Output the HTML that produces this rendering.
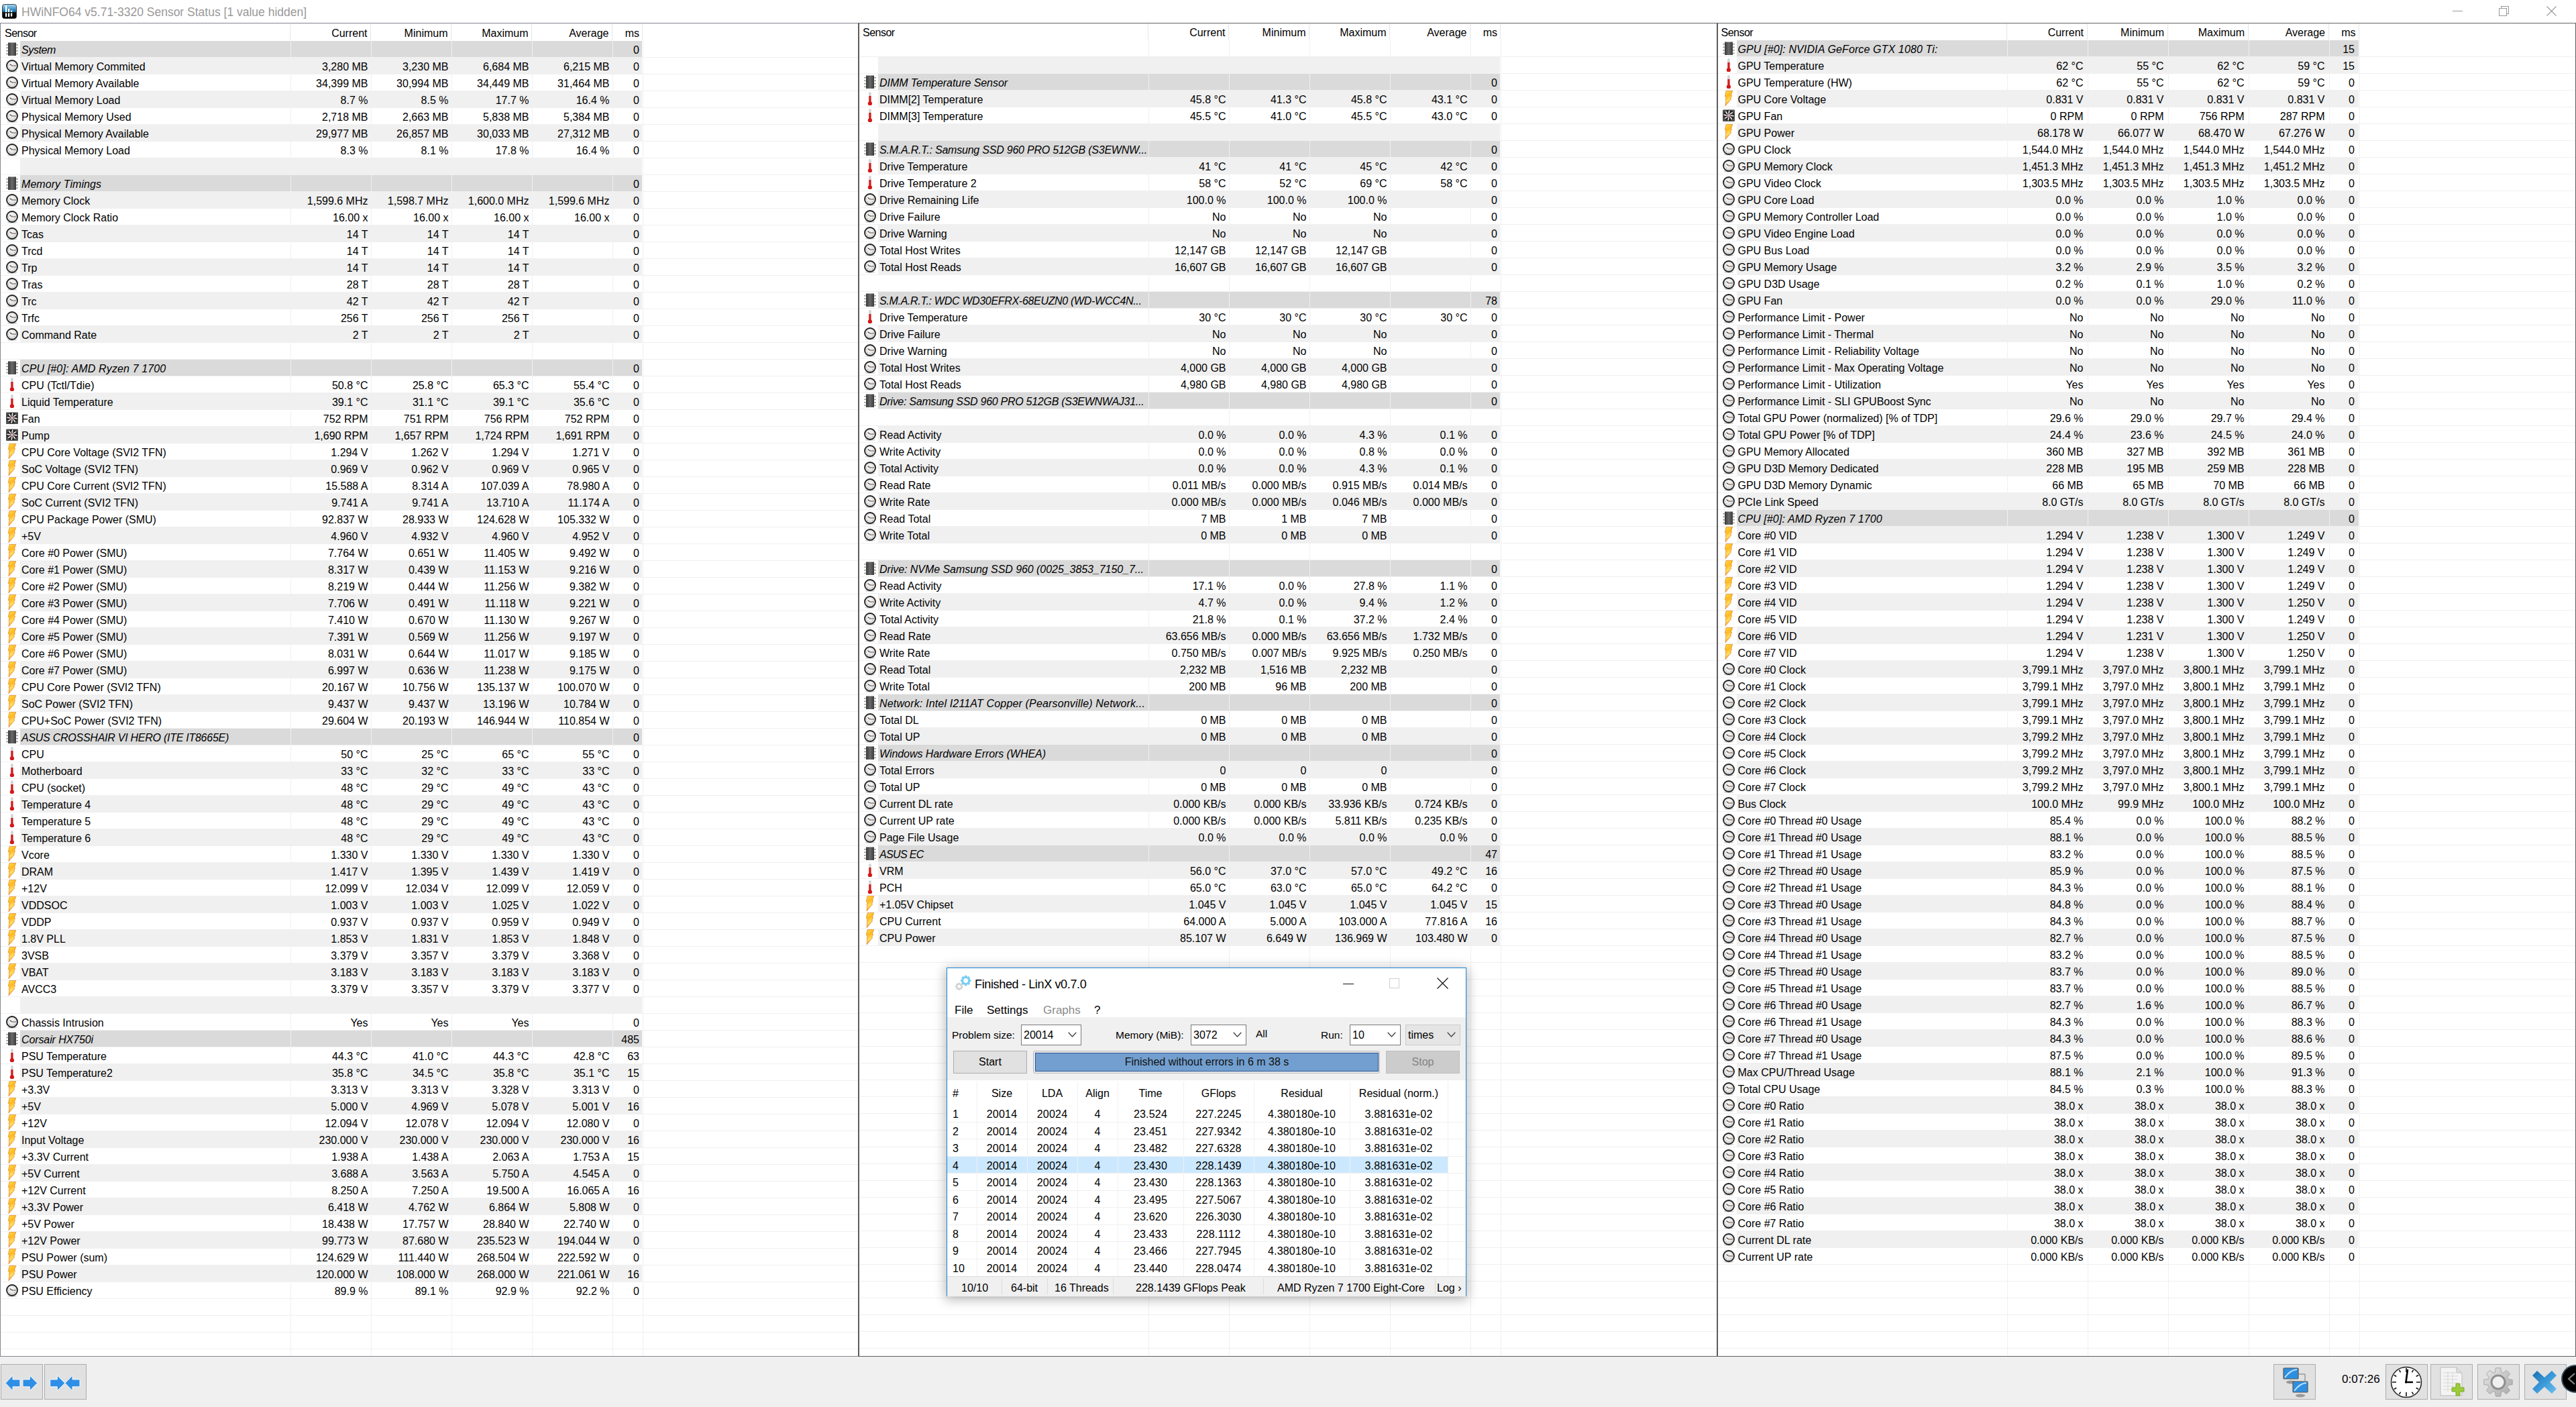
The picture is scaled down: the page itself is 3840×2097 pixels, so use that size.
<!DOCTYPE html><html><head><meta charset="utf-8"><title>HWiNFO64 Sensor Status</title><style>
*{box-sizing:border-box}
body{margin:0;width:3840px;height:2097px;overflow:hidden;position:relative;background:#fff;font-family:"Liberation Sans",sans-serif;font-size:16px;color:#000}
.a{position:absolute}
.p{position:absolute;top:35px;width:1280px;height:1986px;overflow:hidden}
.bg{position:absolute;left:30px;width:927px;height:24px}
.g1{background:#f0f0f0}.g2{background:#dadada}
.hl{position:absolute;left:1px;height:1px;background:#f0f0f0}
.vl{position:absolute;width:1px;background:#f0f0f0}
.hv{position:absolute;top:1px;width:1px;height:24px;background:#e5e5e5}
.w{position:absolute;left:0;width:1000px;height:25px}
.w b{position:absolute;top:2px;font-weight:normal;white-space:pre;line-height:25px;height:25px;text-align:right;width:115px}
.w b.n{left:32px;text-align:left;width:auto}
.w b.i{font-style:italic}
.w b.c1{left:432px;width:116.5px}.w b.c2{left:552px;width:116.5px}.w b.c3{left:672px;width:116.5px}.w b.c4{left:792px;width:116.5px}.w b.c5{left:912px;width:41px}
.w svg{position:absolute;left:8px;top:3px;width:20px;height:20px}.w svg.v{top:1px;height:24px}
.p3 .w b.c1,.p3 .w b.c2,.p3 .w b.c3,.p3 .w b.c4,.p3 .w b.c5{margin-left:-1.5px}
.hd b{position:absolute;top:2px;font-weight:normal;white-space:pre;line-height:25px}
</style></head><body>

<svg width="0" height="0" style="position:absolute">
<defs>
<linearGradient id="chipg" x1="0" y1="0" x2="1" y2="0"><stop offset="0" stop-color="#3a3a3a"/><stop offset="0.5" stop-color="#6a6a6a"/><stop offset="1" stop-color="#3a3a3a"/></linearGradient>
<radialGradient id="clkg" cx="0.45" cy="0.4" r="0.6"><stop offset="0" stop-color="#fafafa"/><stop offset="1" stop-color="#d8d8d8"/></radialGradient>
<linearGradient id="boltg" x1="0" y1="0" x2="0.3" y2="1"><stop offset="0" stop-color="#ffe24a"/><stop offset="0.4" stop-color="#ffb820"/><stop offset="0.7" stop-color="#ffe060"/><stop offset="1" stop-color="#f09020"/></linearGradient>
<symbol id="iG" viewBox="0 0 20 20">
<rect x="4" y="0.5" width="12" height="20" fill="url(#chipg)"/>
<g fill="#777"><rect x="1.5" y="3" width="2" height="1.6"/><rect x="1.5" y="7.5" width="2" height="1.6"/><rect x="1.5" y="12" width="2" height="1.6"/><rect x="1.5" y="16.5" width="2" height="1.6"/>
<rect x="16.5" y="3" width="2" height="1.6"/><rect x="16.5" y="7.5" width="2" height="1.6"/><rect x="16.5" y="12" width="2" height="1.6"/><rect x="16.5" y="16.5" width="2" height="1.6"/></g>
</symbol>
<symbol id="iC" viewBox="0 0 20 20">
<ellipse cx="10" cy="18.6" rx="7.5" ry="1.4" fill="#d0d0d0"/>
<circle cx="10" cy="9.6" r="8.9" fill="#e8e8e8"/>
<circle cx="10" cy="10" r="8" fill="url(#clkg)" stroke="#222" stroke-width="1.8"/>
<g fill="#555"><circle cx="4.6" cy="10" r="0.45"/><circle cx="15.4" cy="10" r="0.45"/><circle cx="6.2" cy="13.8" r="0.45"/><circle cx="13.8" cy="13.8" r="0.45"/><circle cx="10" cy="15.4" r="0.45"/></g>
<path d="M6.6 7.6L10 10" stroke="#1a2a40" stroke-width="1.1" fill="none"/>
<path d="M10 10H15.6" stroke="#444" stroke-width="0.9" fill="none"/>
<circle cx="10" cy="9.6" r="1" fill="#d08050"/>
</symbol>
<symbol id="iT" viewBox="0 0 20 20">
<ellipse cx="9.9" cy="21" rx="2.6" ry="0.7" fill="#c8c8c8"/>
<rect x="8.1" y="0" width="3.6" height="15" rx="1.6" fill="#d4d4d4"/>
<rect x="8.3" y="6" width="3.2" height="10" fill="#d81c1c"/>
<circle cx="9.9" cy="17.3" r="3.1" fill="#d41818"/>
</symbol>
<symbol id="iV" viewBox="0 -3 20 24">
<path d="M6.1 -2.6L15.7 -2.6L13.2 4.2L14.6 4.5L12.5 9L13.7 9.5L5 19.8L5.8 11.5L5.2 10.8L6 7.5L4.4 5.5Z" fill="url(#boltg)" stroke="#e07a20" stroke-width="0.7" stroke-linejoin="round"/>
</symbol>
<symbol id="iF" viewBox="0 0 20 20">
<rect x="1" y="1.5" width="18" height="17.5" rx="1" fill="#505050"/>
<circle cx="10" cy="10" r="8.2" fill="#262626"/>
<path d="M10.0 7.0L10.9 2.5M12.1 7.9L16.0 5.3M13.0 10.0L17.5 10.9M12.1 12.1L14.7 16.0M10.0 13.0L9.1 17.5M7.9 12.1L4.0 14.7M7.0 10.0L2.5 9.1M7.9 7.9L5.3 4.0" stroke="#f4f4f4" stroke-width="1.6" fill="none"/>
<circle cx="10" cy="10" r="2.5" fill="#b8b8b8" stroke="#c05060" stroke-width="0.6"/>
</symbol>
</defs></svg>

<svg class="a" style="left:3px;top:6px" width="22" height="22" viewBox="0 0 22 22">
<defs><linearGradient id="hwg" x1="0" y1="0" x2="0" y2="1"><stop offset="0" stop-color="#a8d8f4"/><stop offset="0.55" stop-color="#0a6aa8"/><stop offset="0.56" stop-color="#111"/><stop offset="1" stop-color="#000"/></linearGradient></defs>
<rect x="0.5" y="0.5" width="21" height="21" rx="3" fill="url(#hwg)" stroke="#222" stroke-width="0.8"/>
<rect x="5" y="2.5" width="2.2" height="9.5" fill="#fff"/><rect x="9" y="7" width="2.2" height="5" fill="#fff"/><rect x="13" y="9.5" width="2.4" height="2.5" rx="1" fill="#fff"/>
<path d="M5 13.5h2.2v5.5h-2.2zM9 13.5h2.2v5.5h-2.2zM13 13.5h2.2v5h-2.2z" fill="#fff"/>
</svg>
<div class="a" style="left:32px;top:5.5px;line-height:25px;font-size:17.5px;color:#999;white-space:pre">HWiNFO64 v5.71-3320 Sensor Status [1 value hidden]</div>
<div class="a" style="left:3656px;top:16px;width:15px;height:1px;background:#999"></div>
<div class="a" style="left:3728px;top:9px;width:12px;height:12px;border:1px solid #999"></div>
<div class="a" style="left:3725px;top:12px;width:12px;height:12px;border:1px solid #999;background:#fff"></div>
<svg class="a" style="left:3796px;top:9px" width="15" height="15"><path d="M0.5 0.5L14.5 14.5M14.5 0.5L0.5 14.5" stroke="#999" stroke-width="1.1"/></svg>
<div class="a" style="left:0;top:34px;width:1279px;height:1px;background:#85878f"></div><div class="a" style="left:1279px;top:34px;width:2561px;height:1px;background:#646464"></div>
<div class="p" style="left:0px;top:35px;">
<div class="bg g2" style="top:26px"></div>
<div class="bg g1" style="top:51px"></div>
<div class="bg g1" style="top:101px"></div>
<div class="bg g1" style="top:151px"></div>
<div class="bg g1" style="top:201px"></div>
<div class="bg g2" style="top:226px"></div>
<div class="bg g1" style="top:251px"></div>
<div class="bg g1" style="top:301px"></div>
<div class="bg g1" style="top:351px"></div>
<div class="bg g1" style="top:401px"></div>
<div class="bg g1" style="top:451px"></div>
<div class="bg g2" style="top:501px"></div>
<div class="bg g1" style="top:551px"></div>
<div class="bg g1" style="top:601px"></div>
<div class="bg g1" style="top:651px"></div>
<div class="bg g1" style="top:701px"></div>
<div class="bg g1" style="top:751px"></div>
<div class="bg g1" style="top:801px"></div>
<div class="bg g1" style="top:851px"></div>
<div class="bg g1" style="top:901px"></div>
<div class="bg g1" style="top:951px"></div>
<div class="bg g1" style="top:1001px"></div>
<div class="bg g2" style="top:1051px"></div>
<div class="bg g1" style="top:1101px"></div>
<div class="bg g1" style="top:1151px"></div>
<div class="bg g1" style="top:1201px"></div>
<div class="bg g1" style="top:1251px"></div>
<div class="bg g1" style="top:1301px"></div>
<div class="bg g1" style="top:1351px"></div>
<div class="bg g1" style="top:1401px"></div>
<div class="bg g1" style="top:1451px"></div>
<div class="bg g2" style="top:1501px"></div>
<div class="bg g1" style="top:1551px"></div>
<div class="bg g1" style="top:1601px"></div>
<div class="bg g1" style="top:1651px"></div>
<div class="bg g1" style="top:1701px"></div>
<div class="bg g1" style="top:1751px"></div>
<div class="bg g1" style="top:1801px"></div>
<div class="bg g1" style="top:1851px"></div>
<div class="hl" style="top:50px;width:1279px"></div>
<div class="hl" style="top:75px;width:1279px"></div>
<div class="hl" style="top:100px;width:1279px"></div>
<div class="hl" style="top:125px;width:1279px"></div>
<div class="hl" style="top:150px;width:1279px"></div>
<div class="hl" style="top:175px;width:1279px"></div>
<div class="hl" style="top:200px;width:1279px"></div>
<div class="hl" style="top:225px;width:1279px"></div>
<div class="hl" style="top:250px;width:1279px"></div>
<div class="hl" style="top:275px;width:1279px"></div>
<div class="hl" style="top:300px;width:1279px"></div>
<div class="hl" style="top:325px;width:1279px"></div>
<div class="hl" style="top:350px;width:1279px"></div>
<div class="hl" style="top:375px;width:1279px"></div>
<div class="hl" style="top:400px;width:1279px"></div>
<div class="hl" style="top:425px;width:1279px"></div>
<div class="hl" style="top:450px;width:1279px"></div>
<div class="hl" style="top:475px;width:1279px"></div>
<div class="hl" style="top:500px;width:1279px"></div>
<div class="hl" style="top:525px;width:1279px"></div>
<div class="hl" style="top:550px;width:1279px"></div>
<div class="hl" style="top:575px;width:1279px"></div>
<div class="hl" style="top:600px;width:1279px"></div>
<div class="hl" style="top:625px;width:1279px"></div>
<div class="hl" style="top:650px;width:1279px"></div>
<div class="hl" style="top:675px;width:1279px"></div>
<div class="hl" style="top:700px;width:1279px"></div>
<div class="hl" style="top:725px;width:1279px"></div>
<div class="hl" style="top:750px;width:1279px"></div>
<div class="hl" style="top:775px;width:1279px"></div>
<div class="hl" style="top:800px;width:1279px"></div>
<div class="hl" style="top:825px;width:1279px"></div>
<div class="hl" style="top:850px;width:1279px"></div>
<div class="hl" style="top:875px;width:1279px"></div>
<div class="hl" style="top:900px;width:1279px"></div>
<div class="hl" style="top:925px;width:1279px"></div>
<div class="hl" style="top:950px;width:1279px"></div>
<div class="hl" style="top:975px;width:1279px"></div>
<div class="hl" style="top:1000px;width:1279px"></div>
<div class="hl" style="top:1025px;width:1279px"></div>
<div class="hl" style="top:1050px;width:1279px"></div>
<div class="hl" style="top:1075px;width:1279px"></div>
<div class="hl" style="top:1100px;width:1279px"></div>
<div class="hl" style="top:1125px;width:1279px"></div>
<div class="hl" style="top:1150px;width:1279px"></div>
<div class="hl" style="top:1175px;width:1279px"></div>
<div class="hl" style="top:1200px;width:1279px"></div>
<div class="hl" style="top:1225px;width:1279px"></div>
<div class="hl" style="top:1250px;width:1279px"></div>
<div class="hl" style="top:1275px;width:1279px"></div>
<div class="hl" style="top:1300px;width:1279px"></div>
<div class="hl" style="top:1325px;width:1279px"></div>
<div class="hl" style="top:1350px;width:1279px"></div>
<div class="hl" style="top:1375px;width:1279px"></div>
<div class="hl" style="top:1400px;width:1279px"></div>
<div class="hl" style="top:1425px;width:1279px"></div>
<div class="hl" style="top:1450px;width:1279px"></div>
<div class="hl" style="top:1475px;width:1279px"></div>
<div class="hl" style="top:1500px;width:1279px"></div>
<div class="hl" style="top:1525px;width:1279px"></div>
<div class="hl" style="top:1550px;width:1279px"></div>
<div class="hl" style="top:1575px;width:1279px"></div>
<div class="hl" style="top:1600px;width:1279px"></div>
<div class="hl" style="top:1625px;width:1279px"></div>
<div class="hl" style="top:1650px;width:1279px"></div>
<div class="hl" style="top:1675px;width:1279px"></div>
<div class="hl" style="top:1700px;width:1279px"></div>
<div class="hl" style="top:1725px;width:1279px"></div>
<div class="hl" style="top:1750px;width:1279px"></div>
<div class="hl" style="top:1775px;width:1279px"></div>
<div class="hl" style="top:1800px;width:1279px"></div>
<div class="hl" style="top:1825px;width:1279px"></div>
<div class="hl" style="top:1850px;width:1279px"></div>
<div class="hl" style="top:1875px;width:1279px"></div>
<div class="hl" style="top:1900px;width:1279px"></div>
<div class="hl" style="top:1925px;width:1279px"></div>
<div class="hl" style="top:1950px;width:1279px"></div>
<div class="hl" style="top:1975px;width:1279px"></div>
<div class="vl" style="left:433px;top:25px;height:1961px"></div>
<div class="vl" style="left:553px;top:25px;height:1961px"></div>
<div class="vl" style="left:673px;top:25px;height:1961px"></div>
<div class="vl" style="left:793px;top:25px;height:1961px"></div>
<div class="vl" style="left:913px;top:25px;height:1961px"></div>
<div class="vl" style="left:958px;top:25px;height:1961px"></div>
<div class="hd">
<div class="hv" style="left:432px"></div>
<div class="hv" style="left:552px"></div>
<div class="hv" style="left:672px"></div>
<div class="hv" style="left:792px"></div>
<div class="hv" style="left:912px"></div>
<div class="hv" style="left:957px"></div>
<b style="left:7px;letter-spacing:-0.5px">Sensor</b>
<b style="right:732.5px">Current</b>
<b style="right:612.5px">Minimum</b>
<b style="right:492.5px">Maximum</b>
<b style="right:372.5px">Average</b>
<b style="right:327px">ms</b>
</div>
<div class="w" style="top:25px"><svg><use href="#iG"/></svg><b class="n i" style="letter-spacing:-0.391px">System</b><b class="c5">0</b></div>
<div class="w" style="top:50px"><svg><use href="#iC"/></svg><b class="n">Virtual Memory Commited</b><b class="c1">3,280 MB</b><b class="c2">3,230 MB</b><b class="c3">6,684 MB</b><b class="c4">6,215 MB</b><b class="c5">0</b></div>
<div class="w" style="top:75px"><svg><use href="#iC"/></svg><b class="n">Virtual Memory Available</b><b class="c1">34,399 MB</b><b class="c2">30,994 MB</b><b class="c3">34,449 MB</b><b class="c4">31,464 MB</b><b class="c5">0</b></div>
<div class="w" style="top:100px"><svg><use href="#iC"/></svg><b class="n">Virtual Memory Load</b><b class="c1">8.7 %</b><b class="c2">8.5 %</b><b class="c3">17.7 %</b><b class="c4">16.4 %</b><b class="c5">0</b></div>
<div class="w" style="top:125px"><svg><use href="#iC"/></svg><b class="n">Physical Memory Used</b><b class="c1">2,718 MB</b><b class="c2">2,663 MB</b><b class="c3">5,838 MB</b><b class="c4">5,384 MB</b><b class="c5">0</b></div>
<div class="w" style="top:150px"><svg><use href="#iC"/></svg><b class="n">Physical Memory Available</b><b class="c1">29,977 MB</b><b class="c2">26,857 MB</b><b class="c3">30,033 MB</b><b class="c4">27,312 MB</b><b class="c5">0</b></div>
<div class="w" style="top:175px"><svg><use href="#iC"/></svg><b class="n">Physical Memory Load</b><b class="c1">8.3 %</b><b class="c2">8.1 %</b><b class="c3">17.8 %</b><b class="c4">16.4 %</b><b class="c5">0</b></div>
<div class="w" style="top:225px"><svg><use href="#iG"/></svg><b class="n i" style="letter-spacing:0.065px">Memory Timings</b><b class="c5">0</b></div>
<div class="w" style="top:250px"><svg><use href="#iC"/></svg><b class="n">Memory Clock</b><b class="c1">1,599.6 MHz</b><b class="c2">1,598.7 MHz</b><b class="c3">1,600.0 MHz</b><b class="c4">1,599.6 MHz</b><b class="c5">0</b></div>
<div class="w" style="top:275px"><svg><use href="#iC"/></svg><b class="n">Memory Clock Ratio</b><b class="c1">16.00 x</b><b class="c2">16.00 x</b><b class="c3">16.00 x</b><b class="c4">16.00 x</b><b class="c5">0</b></div>
<div class="w" style="top:300px"><svg><use href="#iC"/></svg><b class="n">Tcas</b><b class="c1">14 T</b><b class="c2">14 T</b><b class="c3">14 T</b><b class="c5">0</b></div>
<div class="w" style="top:325px"><svg><use href="#iC"/></svg><b class="n">Trcd</b><b class="c1">14 T</b><b class="c2">14 T</b><b class="c3">14 T</b><b class="c5">0</b></div>
<div class="w" style="top:350px"><svg><use href="#iC"/></svg><b class="n">Trp</b><b class="c1">14 T</b><b class="c2">14 T</b><b class="c3">14 T</b><b class="c5">0</b></div>
<div class="w" style="top:375px"><svg><use href="#iC"/></svg><b class="n">Tras</b><b class="c1">28 T</b><b class="c2">28 T</b><b class="c3">28 T</b><b class="c5">0</b></div>
<div class="w" style="top:400px"><svg><use href="#iC"/></svg><b class="n">Trc</b><b class="c1">42 T</b><b class="c2">42 T</b><b class="c3">42 T</b><b class="c5">0</b></div>
<div class="w" style="top:425px"><svg><use href="#iC"/></svg><b class="n">Trfc</b><b class="c1">256 T</b><b class="c2">256 T</b><b class="c3">256 T</b><b class="c5">0</b></div>
<div class="w" style="top:450px"><svg><use href="#iC"/></svg><b class="n">Command Rate</b><b class="c1">2 T</b><b class="c2">2 T</b><b class="c3">2 T</b><b class="c5">0</b></div>
<div class="w" style="top:500px"><svg><use href="#iG"/></svg><b class="n i" style="letter-spacing:0.133px">CPU [#0]: AMD Ryzen 7 1700</b><b class="c5">0</b></div>
<div class="w" style="top:525px"><svg><use href="#iT"/></svg><b class="n">CPU (Tctl/Tdie)</b><b class="c1">50.8 °C</b><b class="c2">25.8 °C</b><b class="c3">65.3 °C</b><b class="c4">55.4 °C</b><b class="c5">0</b></div>
<div class="w" style="top:550px"><svg><use href="#iT"/></svg><b class="n">Liquid Temperature</b><b class="c1">39.1 °C</b><b class="c2">31.1 °C</b><b class="c3">39.1 °C</b><b class="c4">35.6 °C</b><b class="c5">0</b></div>
<div class="w" style="top:575px"><svg><use href="#iF"/></svg><b class="n">Fan</b><b class="c1">752 RPM</b><b class="c2">751 RPM</b><b class="c3">756 RPM</b><b class="c4">752 RPM</b><b class="c5">0</b></div>
<div class="w" style="top:600px"><svg><use href="#iF"/></svg><b class="n">Pump</b><b class="c1">1,690 RPM</b><b class="c2">1,657 RPM</b><b class="c3">1,724 RPM</b><b class="c4">1,691 RPM</b><b class="c5">0</b></div>
<div class="w" style="top:625px"><svg class=v><use href="#iV"/></svg><b class="n">CPU Core Voltage (SVI2 TFN)</b><b class="c1">1.294 V</b><b class="c2">1.262 V</b><b class="c3">1.294 V</b><b class="c4">1.271 V</b><b class="c5">0</b></div>
<div class="w" style="top:650px"><svg class=v><use href="#iV"/></svg><b class="n">SoC Voltage (SVI2 TFN)</b><b class="c1">0.969 V</b><b class="c2">0.962 V</b><b class="c3">0.969 V</b><b class="c4">0.965 V</b><b class="c5">0</b></div>
<div class="w" style="top:675px"><svg class=v><use href="#iV"/></svg><b class="n">CPU Core Current (SVI2 TFN)</b><b class="c1">15.588 A</b><b class="c2">8.314 A</b><b class="c3">107.039 A</b><b class="c4">78.980 A</b><b class="c5">0</b></div>
<div class="w" style="top:700px"><svg class=v><use href="#iV"/></svg><b class="n">SoC Current (SVI2 TFN)</b><b class="c1">9.741 A</b><b class="c2">9.741 A</b><b class="c3">13.710 A</b><b class="c4">11.174 A</b><b class="c5">0</b></div>
<div class="w" style="top:725px"><svg class=v><use href="#iV"/></svg><b class="n">CPU Package Power (SMU)</b><b class="c1">92.837 W</b><b class="c2">28.933 W</b><b class="c3">124.628 W</b><b class="c4">105.332 W</b><b class="c5">0</b></div>
<div class="w" style="top:750px"><svg class=v><use href="#iV"/></svg><b class="n">+5V</b><b class="c1">4.960 V</b><b class="c2">4.932 V</b><b class="c3">4.960 V</b><b class="c4">4.952 V</b><b class="c5">0</b></div>
<div class="w" style="top:775px"><svg class=v><use href="#iV"/></svg><b class="n">Core #0 Power (SMU)</b><b class="c1">7.764 W</b><b class="c2">0.651 W</b><b class="c3">11.405 W</b><b class="c4">9.492 W</b><b class="c5">0</b></div>
<div class="w" style="top:800px"><svg class=v><use href="#iV"/></svg><b class="n">Core #1 Power (SMU)</b><b class="c1">8.317 W</b><b class="c2">0.439 W</b><b class="c3">11.153 W</b><b class="c4">9.216 W</b><b class="c5">0</b></div>
<div class="w" style="top:825px"><svg class=v><use href="#iV"/></svg><b class="n">Core #2 Power (SMU)</b><b class="c1">8.219 W</b><b class="c2">0.444 W</b><b class="c3">11.256 W</b><b class="c4">9.382 W</b><b class="c5">0</b></div>
<div class="w" style="top:850px"><svg class=v><use href="#iV"/></svg><b class="n">Core #3 Power (SMU)</b><b class="c1">7.706 W</b><b class="c2">0.491 W</b><b class="c3">11.118 W</b><b class="c4">9.221 W</b><b class="c5">0</b></div>
<div class="w" style="top:875px"><svg class=v><use href="#iV"/></svg><b class="n">Core #4 Power (SMU)</b><b class="c1">7.410 W</b><b class="c2">0.670 W</b><b class="c3">11.130 W</b><b class="c4">9.267 W</b><b class="c5">0</b></div>
<div class="w" style="top:900px"><svg class=v><use href="#iV"/></svg><b class="n">Core #5 Power (SMU)</b><b class="c1">7.391 W</b><b class="c2">0.569 W</b><b class="c3">11.256 W</b><b class="c4">9.197 W</b><b class="c5">0</b></div>
<div class="w" style="top:925px"><svg class=v><use href="#iV"/></svg><b class="n">Core #6 Power (SMU)</b><b class="c1">8.031 W</b><b class="c2">0.644 W</b><b class="c3">11.017 W</b><b class="c4">9.185 W</b><b class="c5">0</b></div>
<div class="w" style="top:950px"><svg class=v><use href="#iV"/></svg><b class="n">Core #7 Power (SMU)</b><b class="c1">6.997 W</b><b class="c2">0.636 W</b><b class="c3">11.238 W</b><b class="c4">9.175 W</b><b class="c5">0</b></div>
<div class="w" style="top:975px"><svg class=v><use href="#iV"/></svg><b class="n">CPU Core Power (SVI2 TFN)</b><b class="c1">20.167 W</b><b class="c2">10.756 W</b><b class="c3">135.137 W</b><b class="c4">100.070 W</b><b class="c5">0</b></div>
<div class="w" style="top:1000px"><svg class=v><use href="#iV"/></svg><b class="n">SoC Power (SVI2 TFN)</b><b class="c1">9.437 W</b><b class="c2">9.437 W</b><b class="c3">13.196 W</b><b class="c4">10.784 W</b><b class="c5">0</b></div>
<div class="w" style="top:1025px"><svg class=v><use href="#iV"/></svg><b class="n">CPU+SoC Power (SVI2 TFN)</b><b class="c1">29.604 W</b><b class="c2">20.193 W</b><b class="c3">146.944 W</b><b class="c4">110.854 W</b><b class="c5">0</b></div>
<div class="w" style="top:1050px"><svg><use href="#iG"/></svg><b class="n i" style="letter-spacing:-0.258px">ASUS CROSSHAIR VI HERO (ITE IT8665E)</b><b class="c5">0</b></div>
<div class="w" style="top:1075px"><svg><use href="#iT"/></svg><b class="n">CPU</b><b class="c1">50 °C</b><b class="c2">25 °C</b><b class="c3">65 °C</b><b class="c4">55 °C</b><b class="c5">0</b></div>
<div class="w" style="top:1100px"><svg><use href="#iT"/></svg><b class="n">Motherboard</b><b class="c1">33 °C</b><b class="c2">32 °C</b><b class="c3">33 °C</b><b class="c4">33 °C</b><b class="c5">0</b></div>
<div class="w" style="top:1125px"><svg><use href="#iT"/></svg><b class="n">CPU (socket)</b><b class="c1">48 °C</b><b class="c2">29 °C</b><b class="c3">49 °C</b><b class="c4">43 °C</b><b class="c5">0</b></div>
<div class="w" style="top:1150px"><svg><use href="#iT"/></svg><b class="n">Temperature 4</b><b class="c1">48 °C</b><b class="c2">29 °C</b><b class="c3">49 °C</b><b class="c4">43 °C</b><b class="c5">0</b></div>
<div class="w" style="top:1175px"><svg><use href="#iT"/></svg><b class="n">Temperature 5</b><b class="c1">48 °C</b><b class="c2">29 °C</b><b class="c3">49 °C</b><b class="c4">43 °C</b><b class="c5">0</b></div>
<div class="w" style="top:1200px"><svg><use href="#iT"/></svg><b class="n">Temperature 6</b><b class="c1">48 °C</b><b class="c2">29 °C</b><b class="c3">49 °C</b><b class="c4">43 °C</b><b class="c5">0</b></div>
<div class="w" style="top:1225px"><svg class=v><use href="#iV"/></svg><b class="n">Vcore</b><b class="c1">1.330 V</b><b class="c2">1.330 V</b><b class="c3">1.330 V</b><b class="c4">1.330 V</b><b class="c5">0</b></div>
<div class="w" style="top:1250px"><svg class=v><use href="#iV"/></svg><b class="n">DRAM</b><b class="c1">1.417 V</b><b class="c2">1.395 V</b><b class="c3">1.439 V</b><b class="c4">1.419 V</b><b class="c5">0</b></div>
<div class="w" style="top:1275px"><svg class=v><use href="#iV"/></svg><b class="n">+12V</b><b class="c1">12.099 V</b><b class="c2">12.034 V</b><b class="c3">12.099 V</b><b class="c4">12.059 V</b><b class="c5">0</b></div>
<div class="w" style="top:1300px"><svg class=v><use href="#iV"/></svg><b class="n">VDDSOC</b><b class="c1">1.003 V</b><b class="c2">1.003 V</b><b class="c3">1.025 V</b><b class="c4">1.022 V</b><b class="c5">0</b></div>
<div class="w" style="top:1325px"><svg class=v><use href="#iV"/></svg><b class="n">VDDP</b><b class="c1">0.937 V</b><b class="c2">0.937 V</b><b class="c3">0.959 V</b><b class="c4">0.949 V</b><b class="c5">0</b></div>
<div class="w" style="top:1350px"><svg class=v><use href="#iV"/></svg><b class="n">1.8V PLL</b><b class="c1">1.853 V</b><b class="c2">1.831 V</b><b class="c3">1.853 V</b><b class="c4">1.848 V</b><b class="c5">0</b></div>
<div class="w" style="top:1375px"><svg class=v><use href="#iV"/></svg><b class="n">3VSB</b><b class="c1">3.379 V</b><b class="c2">3.357 V</b><b class="c3">3.379 V</b><b class="c4">3.368 V</b><b class="c5">0</b></div>
<div class="w" style="top:1400px"><svg class=v><use href="#iV"/></svg><b class="n">VBAT</b><b class="c1">3.183 V</b><b class="c2">3.183 V</b><b class="c3">3.183 V</b><b class="c4">3.183 V</b><b class="c5">0</b></div>
<div class="w" style="top:1425px"><svg class=v><use href="#iV"/></svg><b class="n">AVCC3</b><b class="c1">3.379 V</b><b class="c2">3.357 V</b><b class="c3">3.379 V</b><b class="c4">3.377 V</b><b class="c5">0</b></div>
<div class="w" style="top:1475px"><svg><use href="#iC"/></svg><b class="n">Chassis Intrusion</b><b class="c1">Yes</b><b class="c2">Yes</b><b class="c3">Yes</b><b class="c5">0</b></div>
<div class="w" style="top:1500px"><svg><use href="#iG"/></svg><b class="n i" style="letter-spacing:-0.106px">Corsair HX750i</b><b class="c5">485</b></div>
<div class="w" style="top:1525px"><svg><use href="#iT"/></svg><b class="n">PSU Temperature</b><b class="c1">44.3 °C</b><b class="c2">41.0 °C</b><b class="c3">44.3 °C</b><b class="c4">42.8 °C</b><b class="c5">63</b></div>
<div class="w" style="top:1550px"><svg><use href="#iT"/></svg><b class="n">PSU Temperature2</b><b class="c1">35.8 °C</b><b class="c2">34.5 °C</b><b class="c3">35.8 °C</b><b class="c4">35.1 °C</b><b class="c5">15</b></div>
<div class="w" style="top:1575px"><svg class=v><use href="#iV"/></svg><b class="n">+3.3V</b><b class="c1">3.313 V</b><b class="c2">3.313 V</b><b class="c3">3.328 V</b><b class="c4">3.313 V</b><b class="c5">0</b></div>
<div class="w" style="top:1600px"><svg class=v><use href="#iV"/></svg><b class="n">+5V</b><b class="c1">5.000 V</b><b class="c2">4.969 V</b><b class="c3">5.078 V</b><b class="c4">5.001 V</b><b class="c5">16</b></div>
<div class="w" style="top:1625px"><svg class=v><use href="#iV"/></svg><b class="n">+12V</b><b class="c1">12.094 V</b><b class="c2">12.078 V</b><b class="c3">12.094 V</b><b class="c4">12.080 V</b><b class="c5">0</b></div>
<div class="w" style="top:1650px"><svg class=v><use href="#iV"/></svg><b class="n">Input Voltage</b><b class="c1">230.000 V</b><b class="c2">230.000 V</b><b class="c3">230.000 V</b><b class="c4">230.000 V</b><b class="c5">16</b></div>
<div class="w" style="top:1675px"><svg class=v><use href="#iV"/></svg><b class="n">+3.3V Current</b><b class="c1">1.938 A</b><b class="c2">1.438 A</b><b class="c3">2.063 A</b><b class="c4">1.753 A</b><b class="c5">15</b></div>
<div class="w" style="top:1700px"><svg class=v><use href="#iV"/></svg><b class="n">+5V Current</b><b class="c1">3.688 A</b><b class="c2">3.563 A</b><b class="c3">5.750 A</b><b class="c4">4.545 A</b><b class="c5">0</b></div>
<div class="w" style="top:1725px"><svg class=v><use href="#iV"/></svg><b class="n">+12V Current</b><b class="c1">8.250 A</b><b class="c2">7.250 A</b><b class="c3">19.500 A</b><b class="c4">16.065 A</b><b class="c5">16</b></div>
<div class="w" style="top:1750px"><svg class=v><use href="#iV"/></svg><b class="n">+3.3V Power</b><b class="c1">6.418 W</b><b class="c2">4.762 W</b><b class="c3">6.864 W</b><b class="c4">5.808 W</b><b class="c5">0</b></div>
<div class="w" style="top:1775px"><svg class=v><use href="#iV"/></svg><b class="n">+5V Power</b><b class="c1">18.438 W</b><b class="c2">17.757 W</b><b class="c3">28.840 W</b><b class="c4">22.740 W</b><b class="c5">0</b></div>
<div class="w" style="top:1800px"><svg class=v><use href="#iV"/></svg><b class="n">+12V Power</b><b class="c1">99.773 W</b><b class="c2">87.680 W</b><b class="c3">235.523 W</b><b class="c4">194.044 W</b><b class="c5">0</b></div>
<div class="w" style="top:1825px"><svg class=v><use href="#iV"/></svg><b class="n">PSU Power (sum)</b><b class="c1">124.629 W</b><b class="c2">111.440 W</b><b class="c3">268.504 W</b><b class="c4">222.592 W</b><b class="c5">0</b></div>
<div class="w" style="top:1850px"><svg class=v><use href="#iV"/></svg><b class="n">PSU Power</b><b class="c1">120.000 W</b><b class="c2">108.000 W</b><b class="c3">268.000 W</b><b class="c4">221.061 W</b><b class="c5">16</b></div>
<div class="w" style="top:1875px"><svg><use href="#iC"/></svg><b class="n">PSU Efficiency</b><b class="c1">89.9 %</b><b class="c2">89.1 %</b><b class="c3">92.9 %</b><b class="c4">92.2 %</b><b class="c5">0</b></div>
</div>
<div class="a" style="left:0px;top:34px;width:1px;height:1988px;background:#85878f"></div>
<div class="p" style="left:1279px;top:34px;">
<div class="bg g1" style="top:51px"></div>
<div class="bg g2" style="top:76px"></div>
<div class="bg g1" style="top:101px"></div>
<div class="bg g1" style="top:151px"></div>
<div class="bg g2" style="top:176px"></div>
<div class="bg g1" style="top:201px"></div>
<div class="bg g1" style="top:251px"></div>
<div class="bg g1" style="top:301px"></div>
<div class="bg g1" style="top:351px"></div>
<div class="bg g2" style="top:401px"></div>
<div class="bg g1" style="top:451px"></div>
<div class="bg g1" style="top:501px"></div>
<div class="bg g2" style="top:551px"></div>
<div class="bg g1" style="top:601px"></div>
<div class="bg g1" style="top:651px"></div>
<div class="bg g1" style="top:701px"></div>
<div class="bg g1" style="top:751px"></div>
<div class="bg g2" style="top:801px"></div>
<div class="bg g1" style="top:851px"></div>
<div class="bg g1" style="top:901px"></div>
<div class="bg g1" style="top:951px"></div>
<div class="bg g2" style="top:1001px"></div>
<div class="bg g1" style="top:1051px"></div>
<div class="bg g2" style="top:1076px"></div>
<div class="bg g1" style="top:1101px"></div>
<div class="bg g1" style="top:1151px"></div>
<div class="bg g1" style="top:1201px"></div>
<div class="bg g2" style="top:1226px"></div>
<div class="bg g1" style="top:1251px"></div>
<div class="bg g1" style="top:1301px"></div>
<div class="bg g1" style="top:1351px"></div>
<div class="hl" style="top:50px;width:1279px"></div>
<div class="hl" style="top:75px;width:1279px"></div>
<div class="hl" style="top:100px;width:1279px"></div>
<div class="hl" style="top:125px;width:1279px"></div>
<div class="hl" style="top:150px;width:1279px"></div>
<div class="hl" style="top:175px;width:1279px"></div>
<div class="hl" style="top:200px;width:1279px"></div>
<div class="hl" style="top:225px;width:1279px"></div>
<div class="hl" style="top:250px;width:1279px"></div>
<div class="hl" style="top:275px;width:1279px"></div>
<div class="hl" style="top:300px;width:1279px"></div>
<div class="hl" style="top:325px;width:1279px"></div>
<div class="hl" style="top:350px;width:1279px"></div>
<div class="hl" style="top:375px;width:1279px"></div>
<div class="hl" style="top:400px;width:1279px"></div>
<div class="hl" style="top:425px;width:1279px"></div>
<div class="hl" style="top:450px;width:1279px"></div>
<div class="hl" style="top:475px;width:1279px"></div>
<div class="hl" style="top:500px;width:1279px"></div>
<div class="hl" style="top:525px;width:1279px"></div>
<div class="hl" style="top:550px;width:1279px"></div>
<div class="hl" style="top:575px;width:1279px"></div>
<div class="hl" style="top:600px;width:1279px"></div>
<div class="hl" style="top:625px;width:1279px"></div>
<div class="hl" style="top:650px;width:1279px"></div>
<div class="hl" style="top:675px;width:1279px"></div>
<div class="hl" style="top:700px;width:1279px"></div>
<div class="hl" style="top:725px;width:1279px"></div>
<div class="hl" style="top:750px;width:1279px"></div>
<div class="hl" style="top:775px;width:1279px"></div>
<div class="hl" style="top:800px;width:1279px"></div>
<div class="hl" style="top:825px;width:1279px"></div>
<div class="hl" style="top:850px;width:1279px"></div>
<div class="hl" style="top:875px;width:1279px"></div>
<div class="hl" style="top:900px;width:1279px"></div>
<div class="hl" style="top:925px;width:1279px"></div>
<div class="hl" style="top:950px;width:1279px"></div>
<div class="hl" style="top:975px;width:1279px"></div>
<div class="hl" style="top:1000px;width:1279px"></div>
<div class="hl" style="top:1025px;width:1279px"></div>
<div class="hl" style="top:1050px;width:1279px"></div>
<div class="hl" style="top:1075px;width:1279px"></div>
<div class="hl" style="top:1100px;width:1279px"></div>
<div class="hl" style="top:1125px;width:1279px"></div>
<div class="hl" style="top:1150px;width:1279px"></div>
<div class="hl" style="top:1175px;width:1279px"></div>
<div class="hl" style="top:1200px;width:1279px"></div>
<div class="hl" style="top:1225px;width:1279px"></div>
<div class="hl" style="top:1250px;width:1279px"></div>
<div class="hl" style="top:1275px;width:1279px"></div>
<div class="hl" style="top:1300px;width:1279px"></div>
<div class="hl" style="top:1325px;width:1279px"></div>
<div class="hl" style="top:1350px;width:1279px"></div>
<div class="hl" style="top:1375px;width:1279px"></div>
<div class="hl" style="top:1400px;width:1279px"></div>
<div class="hl" style="top:1425px;width:1279px"></div>
<div class="hl" style="top:1450px;width:1279px"></div>
<div class="hl" style="top:1475px;width:1279px"></div>
<div class="hl" style="top:1500px;width:1279px"></div>
<div class="hl" style="top:1525px;width:1279px"></div>
<div class="hl" style="top:1550px;width:1279px"></div>
<div class="hl" style="top:1575px;width:1279px"></div>
<div class="hl" style="top:1600px;width:1279px"></div>
<div class="hl" style="top:1625px;width:1279px"></div>
<div class="hl" style="top:1650px;width:1279px"></div>
<div class="hl" style="top:1675px;width:1279px"></div>
<div class="hl" style="top:1700px;width:1279px"></div>
<div class="hl" style="top:1725px;width:1279px"></div>
<div class="hl" style="top:1750px;width:1279px"></div>
<div class="hl" style="top:1775px;width:1279px"></div>
<div class="hl" style="top:1800px;width:1279px"></div>
<div class="hl" style="top:1825px;width:1279px"></div>
<div class="hl" style="top:1850px;width:1279px"></div>
<div class="hl" style="top:1875px;width:1279px"></div>
<div class="hl" style="top:1900px;width:1279px"></div>
<div class="hl" style="top:1925px;width:1279px"></div>
<div class="hl" style="top:1950px;width:1279px"></div>
<div class="hl" style="top:1975px;width:1279px"></div>
<div class="vl" style="left:433px;top:25px;height:1961px"></div>
<div class="vl" style="left:553px;top:25px;height:1961px"></div>
<div class="vl" style="left:673px;top:25px;height:1961px"></div>
<div class="vl" style="left:793px;top:25px;height:1961px"></div>
<div class="vl" style="left:913px;top:25px;height:1961px"></div>
<div class="vl" style="left:958px;top:25px;height:1961px"></div>
<div class="hd">
<div class="hv" style="left:432px"></div>
<div class="hv" style="left:552px"></div>
<div class="hv" style="left:672px"></div>
<div class="hv" style="left:792px"></div>
<div class="hv" style="left:912px"></div>
<div class="hv" style="left:957px"></div>
<b style="left:7px;letter-spacing:-0.5px">Sensor</b>
<b style="right:732.5px">Current</b>
<b style="right:612.5px">Minimum</b>
<b style="right:492.5px">Maximum</b>
<b style="right:372.5px">Average</b>
<b style="right:327px">ms</b>
</div>
<div class="w" style="top:75px"><svg><use href="#iG"/></svg><b class="n i" style="letter-spacing:-0.06px">DIMM Temperature Sensor</b><b class="c5">0</b></div>
<div class="w" style="top:100px"><svg><use href="#iT"/></svg><b class="n">DIMM[2] Temperature</b><b class="c1">45.8 °C</b><b class="c2">41.3 °C</b><b class="c3">45.8 °C</b><b class="c4">43.1 °C</b><b class="c5">0</b></div>
<div class="w" style="top:125px"><svg><use href="#iT"/></svg><b class="n">DIMM[3] Temperature</b><b class="c1">45.5 °C</b><b class="c2">41.0 °C</b><b class="c3">45.5 °C</b><b class="c4">43.0 °C</b><b class="c5">0</b></div>
<div class="w" style="top:175px"><svg><use href="#iG"/></svg><b class="n i" style="letter-spacing:-0.221px">S.M.A.R.T.: Samsung SSD 960 PRO 512GB (S3EWNW...</b><b class="c5">0</b></div>
<div class="w" style="top:200px"><svg><use href="#iT"/></svg><b class="n">Drive Temperature</b><b class="c1">41 °C</b><b class="c2">41 °C</b><b class="c3">45 °C</b><b class="c4">42 °C</b><b class="c5">0</b></div>
<div class="w" style="top:225px"><svg><use href="#iT"/></svg><b class="n">Drive Temperature 2</b><b class="c1">58 °C</b><b class="c2">52 °C</b><b class="c3">69 °C</b><b class="c4">58 °C</b><b class="c5">0</b></div>
<div class="w" style="top:250px"><svg><use href="#iC"/></svg><b class="n">Drive Remaining Life</b><b class="c1">100.0 %</b><b class="c2">100.0 %</b><b class="c3">100.0 %</b><b class="c5">0</b></div>
<div class="w" style="top:275px"><svg><use href="#iC"/></svg><b class="n">Drive Failure</b><b class="c1">No</b><b class="c2">No</b><b class="c3">No</b><b class="c5">0</b></div>
<div class="w" style="top:300px"><svg><use href="#iC"/></svg><b class="n">Drive Warning</b><b class="c1">No</b><b class="c2">No</b><b class="c3">No</b><b class="c5">0</b></div>
<div class="w" style="top:325px"><svg><use href="#iC"/></svg><b class="n">Total Host Writes</b><b class="c1">12,147 GB</b><b class="c2">12,147 GB</b><b class="c3">12,147 GB</b><b class="c5">0</b></div>
<div class="w" style="top:350px"><svg><use href="#iC"/></svg><b class="n">Total Host Reads</b><b class="c1">16,607 GB</b><b class="c2">16,607 GB</b><b class="c3">16,607 GB</b><b class="c5">0</b></div>
<div class="w" style="top:400px"><svg><use href="#iG"/></svg><b class="n i" style="letter-spacing:-0.315px">S.M.A.R.T.: WDC WD30EFRX-68EUZN0 (WD-WCC4N...</b><b class="c5">78</b></div>
<div class="w" style="top:425px"><svg><use href="#iT"/></svg><b class="n">Drive Temperature</b><b class="c1">30 °C</b><b class="c2">30 °C</b><b class="c3">30 °C</b><b class="c4">30 °C</b><b class="c5">0</b></div>
<div class="w" style="top:450px"><svg><use href="#iC"/></svg><b class="n">Drive Failure</b><b class="c1">No</b><b class="c2">No</b><b class="c3">No</b><b class="c5">0</b></div>
<div class="w" style="top:475px"><svg><use href="#iC"/></svg><b class="n">Drive Warning</b><b class="c1">No</b><b class="c2">No</b><b class="c3">No</b><b class="c5">0</b></div>
<div class="w" style="top:500px"><svg><use href="#iC"/></svg><b class="n">Total Host Writes</b><b class="c1">4,000 GB</b><b class="c2">4,000 GB</b><b class="c3">4,000 GB</b><b class="c5">0</b></div>
<div class="w" style="top:525px"><svg><use href="#iC"/></svg><b class="n">Total Host Reads</b><b class="c1">4,980 GB</b><b class="c2">4,980 GB</b><b class="c3">4,980 GB</b><b class="c5">0</b></div>
<div class="w" style="top:550px"><svg><use href="#iG"/></svg><b class="n i" style="letter-spacing:-0.269px">Drive: Samsung SSD 960 PRO 512GB (S3EWNWAJ31...</b><b class="c5">0</b></div>
<div class="w" style="top:600px"><svg><use href="#iC"/></svg><b class="n">Read Activity</b><b class="c1">0.0 %</b><b class="c2">0.0 %</b><b class="c3">4.3 %</b><b class="c4">0.1 %</b><b class="c5">0</b></div>
<div class="w" style="top:625px"><svg><use href="#iC"/></svg><b class="n">Write Activity</b><b class="c1">0.0 %</b><b class="c2">0.0 %</b><b class="c3">0.8 %</b><b class="c4">0.0 %</b><b class="c5">0</b></div>
<div class="w" style="top:650px"><svg><use href="#iC"/></svg><b class="n">Total Activity</b><b class="c1">0.0 %</b><b class="c2">0.0 %</b><b class="c3">4.3 %</b><b class="c4">0.1 %</b><b class="c5">0</b></div>
<div class="w" style="top:675px"><svg><use href="#iC"/></svg><b class="n">Read Rate</b><b class="c1">0.011 MB/s</b><b class="c2">0.000 MB/s</b><b class="c3">0.915 MB/s</b><b class="c4">0.014 MB/s</b><b class="c5">0</b></div>
<div class="w" style="top:700px"><svg><use href="#iC"/></svg><b class="n">Write Rate</b><b class="c1">0.000 MB/s</b><b class="c2">0.000 MB/s</b><b class="c3">0.046 MB/s</b><b class="c4">0.000 MB/s</b><b class="c5">0</b></div>
<div class="w" style="top:725px"><svg><use href="#iC"/></svg><b class="n">Read Total</b><b class="c1">7 MB</b><b class="c2">1 MB</b><b class="c3">7 MB</b><b class="c5">0</b></div>
<div class="w" style="top:750px"><svg><use href="#iC"/></svg><b class="n">Write Total</b><b class="c1">0 MB</b><b class="c2">0 MB</b><b class="c3">0 MB</b><b class="c5">0</b></div>
<div class="w" style="top:800px"><svg><use href="#iG"/></svg><b class="n i" style="letter-spacing:-0.056px">Drive: NVMe Samsung SSD 960 (0025_3853_7150_7...</b><b class="c5">0</b></div>
<div class="w" style="top:825px"><svg><use href="#iC"/></svg><b class="n">Read Activity</b><b class="c1">17.1 %</b><b class="c2">0.0 %</b><b class="c3">27.8 %</b><b class="c4">1.1 %</b><b class="c5">0</b></div>
<div class="w" style="top:850px"><svg><use href="#iC"/></svg><b class="n">Write Activity</b><b class="c1">4.7 %</b><b class="c2">0.0 %</b><b class="c3">9.4 %</b><b class="c4">1.2 %</b><b class="c5">0</b></div>
<div class="w" style="top:875px"><svg><use href="#iC"/></svg><b class="n">Total Activity</b><b class="c1">21.8 %</b><b class="c2">0.1 %</b><b class="c3">37.2 %</b><b class="c4">2.4 %</b><b class="c5">0</b></div>
<div class="w" style="top:900px"><svg><use href="#iC"/></svg><b class="n">Read Rate</b><b class="c1">63.656 MB/s</b><b class="c2">0.000 MB/s</b><b class="c3">63.656 MB/s</b><b class="c4">1.732 MB/s</b><b class="c5">0</b></div>
<div class="w" style="top:925px"><svg><use href="#iC"/></svg><b class="n">Write Rate</b><b class="c1">0.750 MB/s</b><b class="c2">0.007 MB/s</b><b class="c3">9.925 MB/s</b><b class="c4">0.250 MB/s</b><b class="c5">0</b></div>
<div class="w" style="top:950px"><svg><use href="#iC"/></svg><b class="n">Read Total</b><b class="c1">2,232 MB</b><b class="c2">1,516 MB</b><b class="c3">2,232 MB</b><b class="c5">0</b></div>
<div class="w" style="top:975px"><svg><use href="#iC"/></svg><b class="n">Write Total</b><b class="c1">200 MB</b><b class="c2">96 MB</b><b class="c3">200 MB</b><b class="c5">0</b></div>
<div class="w" style="top:1000px"><svg><use href="#iG"/></svg><b class="n i" style="letter-spacing:0.165px">Network: Intel I211AT Copper (Pearsonville) Network...</b><b class="c5">0</b></div>
<div class="w" style="top:1025px"><svg><use href="#iC"/></svg><b class="n">Total DL</b><b class="c1">0 MB</b><b class="c2">0 MB</b><b class="c3">0 MB</b><b class="c5">0</b></div>
<div class="w" style="top:1050px"><svg><use href="#iC"/></svg><b class="n">Total UP</b><b class="c1">0 MB</b><b class="c2">0 MB</b><b class="c3">0 MB</b><b class="c5">0</b></div>
<div class="w" style="top:1075px"><svg><use href="#iG"/></svg><b class="n i" style="letter-spacing:-0.059px">Windows Hardware Errors (WHEA)</b><b class="c5">0</b></div>
<div class="w" style="top:1100px"><svg><use href="#iC"/></svg><b class="n">Total Errors</b><b class="c1">0</b><b class="c2">0</b><b class="c3">0</b><b class="c5">0</b></div>
<div class="w" style="top:1125px"><svg><use href="#iC"/></svg><b class="n">Total UP</b><b class="c1">0 MB</b><b class="c2">0 MB</b><b class="c3">0 MB</b><b class="c5">0</b></div>
<div class="w" style="top:1150px"><svg><use href="#iC"/></svg><b class="n">Current DL rate</b><b class="c1">0.000 KB/s</b><b class="c2">0.000 KB/s</b><b class="c3">33.936 KB/s</b><b class="c4">0.724 KB/s</b><b class="c5">0</b></div>
<div class="w" style="top:1175px"><svg><use href="#iC"/></svg><b class="n">Current UP rate</b><b class="c1">0.000 KB/s</b><b class="c2">0.000 KB/s</b><b class="c3">5.811 KB/s</b><b class="c4">0.235 KB/s</b><b class="c5">0</b></div>
<div class="w" style="top:1200px"><svg><use href="#iC"/></svg><b class="n">Page File Usage</b><b class="c1">0.0 %</b><b class="c2">0.0 %</b><b class="c3">0.0 %</b><b class="c4">0.0 %</b><b class="c5">0</b></div>
<div class="w" style="top:1225px"><svg><use href="#iG"/></svg><b class="n i" style="letter-spacing:-0.664px">ASUS EC</b><b class="c5">47</b></div>
<div class="w" style="top:1250px"><svg><use href="#iT"/></svg><b class="n">VRM</b><b class="c1">56.0 °C</b><b class="c2">37.0 °C</b><b class="c3">57.0 °C</b><b class="c4">49.2 °C</b><b class="c5">16</b></div>
<div class="w" style="top:1275px"><svg><use href="#iT"/></svg><b class="n">PCH</b><b class="c1">65.0 °C</b><b class="c2">63.0 °C</b><b class="c3">65.0 °C</b><b class="c4">64.2 °C</b><b class="c5">0</b></div>
<div class="w" style="top:1300px"><svg class=v><use href="#iV"/></svg><b class="n">+1.05V Chipset</b><b class="c1">1.045 V</b><b class="c2">1.045 V</b><b class="c3">1.045 V</b><b class="c4">1.045 V</b><b class="c5">15</b></div>
<div class="w" style="top:1325px"><svg class=v><use href="#iV"/></svg><b class="n">CPU Current</b><b class="c1">64.000 A</b><b class="c2">5.000 A</b><b class="c3">103.000 A</b><b class="c4">77.816 A</b><b class="c5">16</b></div>
<div class="w" style="top:1350px"><svg class=v><use href="#iV"/></svg><b class="n">CPU Power</b><b class="c1">85.107 W</b><b class="c2">6.649 W</b><b class="c3">136.969 W</b><b class="c4">103.480 W</b><b class="c5">0</b></div>
</div>
<div class="a" style="left:1279px;top:34px;width:2px;height:1988px;background:#5c5c5c"></div>
<div class="p p3" style="left:2558.5px;top:34px;">
<div class="bg g2" style="top:26px"></div>
<div class="bg g1" style="top:51px"></div>
<div class="bg g1" style="top:101px"></div>
<div class="bg g1" style="top:151px"></div>
<div class="bg g1" style="top:201px"></div>
<div class="bg g1" style="top:251px"></div>
<div class="bg g1" style="top:301px"></div>
<div class="bg g1" style="top:351px"></div>
<div class="bg g1" style="top:401px"></div>
<div class="bg g1" style="top:451px"></div>
<div class="bg g1" style="top:501px"></div>
<div class="bg g1" style="top:551px"></div>
<div class="bg g1" style="top:601px"></div>
<div class="bg g1" style="top:651px"></div>
<div class="bg g1" style="top:701px"></div>
<div class="bg g2" style="top:726px"></div>
<div class="bg g1" style="top:751px"></div>
<div class="bg g1" style="top:801px"></div>
<div class="bg g1" style="top:851px"></div>
<div class="bg g1" style="top:901px"></div>
<div class="bg g1" style="top:951px"></div>
<div class="bg g1" style="top:1001px"></div>
<div class="bg g1" style="top:1051px"></div>
<div class="bg g1" style="top:1101px"></div>
<div class="bg g1" style="top:1151px"></div>
<div class="bg g1" style="top:1201px"></div>
<div class="bg g1" style="top:1251px"></div>
<div class="bg g1" style="top:1301px"></div>
<div class="bg g1" style="top:1351px"></div>
<div class="bg g1" style="top:1401px"></div>
<div class="bg g1" style="top:1451px"></div>
<div class="bg g1" style="top:1501px"></div>
<div class="bg g1" style="top:1551px"></div>
<div class="bg g1" style="top:1601px"></div>
<div class="bg g1" style="top:1651px"></div>
<div class="bg g1" style="top:1701px"></div>
<div class="bg g1" style="top:1751px"></div>
<div class="bg g1" style="top:1801px"></div>
<div class="hl" style="top:50px;width:1279px"></div>
<div class="hl" style="top:75px;width:1279px"></div>
<div class="hl" style="top:100px;width:1279px"></div>
<div class="hl" style="top:125px;width:1279px"></div>
<div class="hl" style="top:150px;width:1279px"></div>
<div class="hl" style="top:175px;width:1279px"></div>
<div class="hl" style="top:200px;width:1279px"></div>
<div class="hl" style="top:225px;width:1279px"></div>
<div class="hl" style="top:250px;width:1279px"></div>
<div class="hl" style="top:275px;width:1279px"></div>
<div class="hl" style="top:300px;width:1279px"></div>
<div class="hl" style="top:325px;width:1279px"></div>
<div class="hl" style="top:350px;width:1279px"></div>
<div class="hl" style="top:375px;width:1279px"></div>
<div class="hl" style="top:400px;width:1279px"></div>
<div class="hl" style="top:425px;width:1279px"></div>
<div class="hl" style="top:450px;width:1279px"></div>
<div class="hl" style="top:475px;width:1279px"></div>
<div class="hl" style="top:500px;width:1279px"></div>
<div class="hl" style="top:525px;width:1279px"></div>
<div class="hl" style="top:550px;width:1279px"></div>
<div class="hl" style="top:575px;width:1279px"></div>
<div class="hl" style="top:600px;width:1279px"></div>
<div class="hl" style="top:625px;width:1279px"></div>
<div class="hl" style="top:650px;width:1279px"></div>
<div class="hl" style="top:675px;width:1279px"></div>
<div class="hl" style="top:700px;width:1279px"></div>
<div class="hl" style="top:725px;width:1279px"></div>
<div class="hl" style="top:750px;width:1279px"></div>
<div class="hl" style="top:775px;width:1279px"></div>
<div class="hl" style="top:800px;width:1279px"></div>
<div class="hl" style="top:825px;width:1279px"></div>
<div class="hl" style="top:850px;width:1279px"></div>
<div class="hl" style="top:875px;width:1279px"></div>
<div class="hl" style="top:900px;width:1279px"></div>
<div class="hl" style="top:925px;width:1279px"></div>
<div class="hl" style="top:950px;width:1279px"></div>
<div class="hl" style="top:975px;width:1279px"></div>
<div class="hl" style="top:1000px;width:1279px"></div>
<div class="hl" style="top:1025px;width:1279px"></div>
<div class="hl" style="top:1050px;width:1279px"></div>
<div class="hl" style="top:1075px;width:1279px"></div>
<div class="hl" style="top:1100px;width:1279px"></div>
<div class="hl" style="top:1125px;width:1279px"></div>
<div class="hl" style="top:1150px;width:1279px"></div>
<div class="hl" style="top:1175px;width:1279px"></div>
<div class="hl" style="top:1200px;width:1279px"></div>
<div class="hl" style="top:1225px;width:1279px"></div>
<div class="hl" style="top:1250px;width:1279px"></div>
<div class="hl" style="top:1275px;width:1279px"></div>
<div class="hl" style="top:1300px;width:1279px"></div>
<div class="hl" style="top:1325px;width:1279px"></div>
<div class="hl" style="top:1350px;width:1279px"></div>
<div class="hl" style="top:1375px;width:1279px"></div>
<div class="hl" style="top:1400px;width:1279px"></div>
<div class="hl" style="top:1425px;width:1279px"></div>
<div class="hl" style="top:1450px;width:1279px"></div>
<div class="hl" style="top:1475px;width:1279px"></div>
<div class="hl" style="top:1500px;width:1279px"></div>
<div class="hl" style="top:1525px;width:1279px"></div>
<div class="hl" style="top:1550px;width:1279px"></div>
<div class="hl" style="top:1575px;width:1279px"></div>
<div class="hl" style="top:1600px;width:1279px"></div>
<div class="hl" style="top:1625px;width:1279px"></div>
<div class="hl" style="top:1650px;width:1279px"></div>
<div class="hl" style="top:1675px;width:1279px"></div>
<div class="hl" style="top:1700px;width:1279px"></div>
<div class="hl" style="top:1725px;width:1279px"></div>
<div class="hl" style="top:1750px;width:1279px"></div>
<div class="hl" style="top:1775px;width:1279px"></div>
<div class="hl" style="top:1800px;width:1279px"></div>
<div class="hl" style="top:1825px;width:1279px"></div>
<div class="hl" style="top:1850px;width:1279px"></div>
<div class="hl" style="top:1875px;width:1279px"></div>
<div class="hl" style="top:1900px;width:1279px"></div>
<div class="hl" style="top:1925px;width:1279px"></div>
<div class="hl" style="top:1950px;width:1279px"></div>
<div class="hl" style="top:1975px;width:1279px"></div>
<div class="vl" style="left:433px;top:25px;height:1961px"></div>
<div class="vl" style="left:553px;top:25px;height:1961px"></div>
<div class="vl" style="left:673px;top:25px;height:1961px"></div>
<div class="vl" style="left:793px;top:25px;height:1961px"></div>
<div class="vl" style="left:913px;top:25px;height:1961px"></div>
<div class="vl" style="left:958px;top:25px;height:1961px"></div>
<div class="hd">
<div class="hv" style="left:432px"></div>
<div class="hv" style="left:552px"></div>
<div class="hv" style="left:672px"></div>
<div class="hv" style="left:792px"></div>
<div class="hv" style="left:912px"></div>
<div class="hv" style="left:957px"></div>
<b style="left:7px;letter-spacing:-0.5px">Sensor</b>
<b style="right:732.5px">Current</b>
<b style="right:612.5px">Minimum</b>
<b style="right:492.5px">Maximum</b>
<b style="right:372.5px">Average</b>
<b style="right:327px">ms</b>
</div>
<div class="w" style="top:25px"><svg><use href="#iG"/></svg><b class="n i" style="letter-spacing:0.119px">GPU [#0]: NVIDIA GeForce GTX 1080 Ti:</b><b class="c5">15</b></div>
<div class="w" style="top:50px"><svg><use href="#iT"/></svg><b class="n">GPU Temperature</b><b class="c1">62 °C</b><b class="c2">55 °C</b><b class="c3">62 °C</b><b class="c4">59 °C</b><b class="c5">15</b></div>
<div class="w" style="top:75px"><svg><use href="#iT"/></svg><b class="n">GPU Temperature (HW)</b><b class="c1">62 °C</b><b class="c2">55 °C</b><b class="c3">62 °C</b><b class="c4">59 °C</b><b class="c5">0</b></div>
<div class="w" style="top:100px"><svg class=v><use href="#iV"/></svg><b class="n">GPU Core Voltage</b><b class="c1">0.831 V</b><b class="c2">0.831 V</b><b class="c3">0.831 V</b><b class="c4">0.831 V</b><b class="c5">0</b></div>
<div class="w" style="top:125px"><svg><use href="#iF"/></svg><b class="n">GPU Fan</b><b class="c1">0 RPM</b><b class="c2">0 RPM</b><b class="c3">756 RPM</b><b class="c4">287 RPM</b><b class="c5">0</b></div>
<div class="w" style="top:150px"><svg class=v><use href="#iV"/></svg><b class="n">GPU Power</b><b class="c1">68.178 W</b><b class="c2">66.077 W</b><b class="c3">68.470 W</b><b class="c4">67.276 W</b><b class="c5">0</b></div>
<div class="w" style="top:175px"><svg><use href="#iC"/></svg><b class="n">GPU Clock</b><b class="c1">1,544.0 MHz</b><b class="c2">1,544.0 MHz</b><b class="c3">1,544.0 MHz</b><b class="c4">1,544.0 MHz</b><b class="c5">0</b></div>
<div class="w" style="top:200px"><svg><use href="#iC"/></svg><b class="n">GPU Memory Clock</b><b class="c1">1,451.3 MHz</b><b class="c2">1,451.3 MHz</b><b class="c3">1,451.3 MHz</b><b class="c4">1,451.2 MHz</b><b class="c5">0</b></div>
<div class="w" style="top:225px"><svg><use href="#iC"/></svg><b class="n">GPU Video Clock</b><b class="c1">1,303.5 MHz</b><b class="c2">1,303.5 MHz</b><b class="c3">1,303.5 MHz</b><b class="c4">1,303.5 MHz</b><b class="c5">0</b></div>
<div class="w" style="top:250px"><svg><use href="#iC"/></svg><b class="n">GPU Core Load</b><b class="c1">0.0 %</b><b class="c2">0.0 %</b><b class="c3">1.0 %</b><b class="c4">0.0 %</b><b class="c5">0</b></div>
<div class="w" style="top:275px"><svg><use href="#iC"/></svg><b class="n">GPU Memory Controller Load</b><b class="c1">0.0 %</b><b class="c2">0.0 %</b><b class="c3">1.0 %</b><b class="c4">0.0 %</b><b class="c5">0</b></div>
<div class="w" style="top:300px"><svg><use href="#iC"/></svg><b class="n">GPU Video Engine Load</b><b class="c1">0.0 %</b><b class="c2">0.0 %</b><b class="c3">0.0 %</b><b class="c4">0.0 %</b><b class="c5">0</b></div>
<div class="w" style="top:325px"><svg><use href="#iC"/></svg><b class="n">GPU Bus Load</b><b class="c1">0.0 %</b><b class="c2">0.0 %</b><b class="c3">0.0 %</b><b class="c4">0.0 %</b><b class="c5">0</b></div>
<div class="w" style="top:350px"><svg><use href="#iC"/></svg><b class="n">GPU Memory Usage</b><b class="c1">3.2 %</b><b class="c2">2.9 %</b><b class="c3">3.5 %</b><b class="c4">3.2 %</b><b class="c5">0</b></div>
<div class="w" style="top:375px"><svg><use href="#iC"/></svg><b class="n">GPU D3D Usage</b><b class="c1">0.2 %</b><b class="c2">0.1 %</b><b class="c3">1.0 %</b><b class="c4">0.2 %</b><b class="c5">0</b></div>
<div class="w" style="top:400px"><svg><use href="#iC"/></svg><b class="n">GPU Fan</b><b class="c1">0.0 %</b><b class="c2">0.0 %</b><b class="c3">29.0 %</b><b class="c4">11.0 %</b><b class="c5">0</b></div>
<div class="w" style="top:425px"><svg><use href="#iC"/></svg><b class="n">Performance Limit - Power</b><b class="c1">No</b><b class="c2">No</b><b class="c3">No</b><b class="c4">No</b><b class="c5">0</b></div>
<div class="w" style="top:450px"><svg><use href="#iC"/></svg><b class="n">Performance Limit - Thermal</b><b class="c1">No</b><b class="c2">No</b><b class="c3">No</b><b class="c4">No</b><b class="c5">0</b></div>
<div class="w" style="top:475px"><svg><use href="#iC"/></svg><b class="n">Performance Limit - Reliability Voltage</b><b class="c1">No</b><b class="c2">No</b><b class="c3">No</b><b class="c4">No</b><b class="c5">0</b></div>
<div class="w" style="top:500px"><svg><use href="#iC"/></svg><b class="n">Performance Limit - Max Operating Voltage</b><b class="c1">No</b><b class="c2">No</b><b class="c3">No</b><b class="c4">No</b><b class="c5">0</b></div>
<div class="w" style="top:525px"><svg><use href="#iC"/></svg><b class="n">Performance Limit - Utilization</b><b class="c1">Yes</b><b class="c2">Yes</b><b class="c3">Yes</b><b class="c4">Yes</b><b class="c5">0</b></div>
<div class="w" style="top:550px"><svg><use href="#iC"/></svg><b class="n">Performance Limit - SLI GPUBoost Sync</b><b class="c1">No</b><b class="c2">No</b><b class="c3">No</b><b class="c4">No</b><b class="c5">0</b></div>
<div class="w" style="top:575px"><svg><use href="#iC"/></svg><b class="n">Total GPU Power (normalized) [% of TDP]</b><b class="c1">29.6 %</b><b class="c2">29.0 %</b><b class="c3">29.7 %</b><b class="c4">29.4 %</b><b class="c5">0</b></div>
<div class="w" style="top:600px"><svg><use href="#iC"/></svg><b class="n">Total GPU Power [% of TDP]</b><b class="c1">24.4 %</b><b class="c2">23.6 %</b><b class="c3">24.5 %</b><b class="c4">24.0 %</b><b class="c5">0</b></div>
<div class="w" style="top:625px"><svg><use href="#iC"/></svg><b class="n">GPU Memory Allocated</b><b class="c1">360 MB</b><b class="c2">327 MB</b><b class="c3">392 MB</b><b class="c4">361 MB</b><b class="c5">0</b></div>
<div class="w" style="top:650px"><svg><use href="#iC"/></svg><b class="n">GPU D3D Memory Dedicated</b><b class="c1">228 MB</b><b class="c2">195 MB</b><b class="c3">259 MB</b><b class="c4">228 MB</b><b class="c5">0</b></div>
<div class="w" style="top:675px"><svg><use href="#iC"/></svg><b class="n">GPU D3D Memory Dynamic</b><b class="c1">66 MB</b><b class="c2">65 MB</b><b class="c3">70 MB</b><b class="c4">66 MB</b><b class="c5">0</b></div>
<div class="w" style="top:700px"><svg><use href="#iC"/></svg><b class="n">PCIe Link Speed</b><b class="c1">8.0 GT/s</b><b class="c2">8.0 GT/s</b><b class="c3">8.0 GT/s</b><b class="c4">8.0 GT/s</b><b class="c5">0</b></div>
<div class="w" style="top:725px"><svg><use href="#iG"/></svg><b class="n i" style="letter-spacing:0.133px">CPU [#0]: AMD Ryzen 7 1700</b><b class="c5">0</b></div>
<div class="w" style="top:750px"><svg class=v><use href="#iV"/></svg><b class="n">Core #0 VID</b><b class="c1">1.294 V</b><b class="c2">1.238 V</b><b class="c3">1.300 V</b><b class="c4">1.249 V</b><b class="c5">0</b></div>
<div class="w" style="top:775px"><svg class=v><use href="#iV"/></svg><b class="n">Core #1 VID</b><b class="c1">1.294 V</b><b class="c2">1.238 V</b><b class="c3">1.300 V</b><b class="c4">1.249 V</b><b class="c5">0</b></div>
<div class="w" style="top:800px"><svg class=v><use href="#iV"/></svg><b class="n">Core #2 VID</b><b class="c1">1.294 V</b><b class="c2">1.238 V</b><b class="c3">1.300 V</b><b class="c4">1.249 V</b><b class="c5">0</b></div>
<div class="w" style="top:825px"><svg class=v><use href="#iV"/></svg><b class="n">Core #3 VID</b><b class="c1">1.294 V</b><b class="c2">1.238 V</b><b class="c3">1.300 V</b><b class="c4">1.249 V</b><b class="c5">0</b></div>
<div class="w" style="top:850px"><svg class=v><use href="#iV"/></svg><b class="n">Core #4 VID</b><b class="c1">1.294 V</b><b class="c2">1.238 V</b><b class="c3">1.300 V</b><b class="c4">1.250 V</b><b class="c5">0</b></div>
<div class="w" style="top:875px"><svg class=v><use href="#iV"/></svg><b class="n">Core #5 VID</b><b class="c1">1.294 V</b><b class="c2">1.238 V</b><b class="c3">1.300 V</b><b class="c4">1.249 V</b><b class="c5">0</b></div>
<div class="w" style="top:900px"><svg class=v><use href="#iV"/></svg><b class="n">Core #6 VID</b><b class="c1">1.294 V</b><b class="c2">1.231 V</b><b class="c3">1.300 V</b><b class="c4">1.250 V</b><b class="c5">0</b></div>
<div class="w" style="top:925px"><svg class=v><use href="#iV"/></svg><b class="n">Core #7 VID</b><b class="c1">1.294 V</b><b class="c2">1.238 V</b><b class="c3">1.300 V</b><b class="c4">1.250 V</b><b class="c5">0</b></div>
<div class="w" style="top:950px"><svg><use href="#iC"/></svg><b class="n">Core #0 Clock</b><b class="c1">3,799.1 MHz</b><b class="c2">3,797.0 MHz</b><b class="c3">3,800.1 MHz</b><b class="c4">3,799.1 MHz</b><b class="c5">0</b></div>
<div class="w" style="top:975px"><svg><use href="#iC"/></svg><b class="n">Core #1 Clock</b><b class="c1">3,799.1 MHz</b><b class="c2">3,797.0 MHz</b><b class="c3">3,800.1 MHz</b><b class="c4">3,799.1 MHz</b><b class="c5">0</b></div>
<div class="w" style="top:1000px"><svg><use href="#iC"/></svg><b class="n">Core #2 Clock</b><b class="c1">3,799.1 MHz</b><b class="c2">3,797.0 MHz</b><b class="c3">3,800.1 MHz</b><b class="c4">3,799.1 MHz</b><b class="c5">0</b></div>
<div class="w" style="top:1025px"><svg><use href="#iC"/></svg><b class="n">Core #3 Clock</b><b class="c1">3,799.1 MHz</b><b class="c2">3,797.0 MHz</b><b class="c3">3,800.1 MHz</b><b class="c4">3,799.1 MHz</b><b class="c5">0</b></div>
<div class="w" style="top:1050px"><svg><use href="#iC"/></svg><b class="n">Core #4 Clock</b><b class="c1">3,799.2 MHz</b><b class="c2">3,797.0 MHz</b><b class="c3">3,800.1 MHz</b><b class="c4">3,799.1 MHz</b><b class="c5">0</b></div>
<div class="w" style="top:1075px"><svg><use href="#iC"/></svg><b class="n">Core #5 Clock</b><b class="c1">3,799.2 MHz</b><b class="c2">3,797.0 MHz</b><b class="c3">3,800.1 MHz</b><b class="c4">3,799.1 MHz</b><b class="c5">0</b></div>
<div class="w" style="top:1100px"><svg><use href="#iC"/></svg><b class="n">Core #6 Clock</b><b class="c1">3,799.2 MHz</b><b class="c2">3,797.0 MHz</b><b class="c3">3,800.1 MHz</b><b class="c4">3,799.1 MHz</b><b class="c5">0</b></div>
<div class="w" style="top:1125px"><svg><use href="#iC"/></svg><b class="n">Core #7 Clock</b><b class="c1">3,799.2 MHz</b><b class="c2">3,797.0 MHz</b><b class="c3">3,800.1 MHz</b><b class="c4">3,799.1 MHz</b><b class="c5">0</b></div>
<div class="w" style="top:1150px"><svg><use href="#iC"/></svg><b class="n">Bus Clock</b><b class="c1">100.0 MHz</b><b class="c2">99.9 MHz</b><b class="c3">100.0 MHz</b><b class="c4">100.0 MHz</b><b class="c5">0</b></div>
<div class="w" style="top:1175px"><svg><use href="#iC"/></svg><b class="n">Core #0 Thread #0 Usage</b><b class="c1">85.4 %</b><b class="c2">0.0 %</b><b class="c3">100.0 %</b><b class="c4">88.2 %</b><b class="c5">0</b></div>
<div class="w" style="top:1200px"><svg><use href="#iC"/></svg><b class="n">Core #1 Thread #0 Usage</b><b class="c1">88.1 %</b><b class="c2">0.0 %</b><b class="c3">100.0 %</b><b class="c4">88.5 %</b><b class="c5">0</b></div>
<div class="w" style="top:1225px"><svg><use href="#iC"/></svg><b class="n">Core #1 Thread #1 Usage</b><b class="c1">83.2 %</b><b class="c2">0.0 %</b><b class="c3">100.0 %</b><b class="c4">88.5 %</b><b class="c5">0</b></div>
<div class="w" style="top:1250px"><svg><use href="#iC"/></svg><b class="n">Core #2 Thread #0 Usage</b><b class="c1">85.9 %</b><b class="c2">0.0 %</b><b class="c3">100.0 %</b><b class="c4">87.5 %</b><b class="c5">0</b></div>
<div class="w" style="top:1275px"><svg><use href="#iC"/></svg><b class="n">Core #2 Thread #1 Usage</b><b class="c1">84.3 %</b><b class="c2">0.0 %</b><b class="c3">100.0 %</b><b class="c4">88.1 %</b><b class="c5">0</b></div>
<div class="w" style="top:1300px"><svg><use href="#iC"/></svg><b class="n">Core #3 Thread #0 Usage</b><b class="c1">84.8 %</b><b class="c2">0.0 %</b><b class="c3">100.0 %</b><b class="c4">88.4 %</b><b class="c5">0</b></div>
<div class="w" style="top:1325px"><svg><use href="#iC"/></svg><b class="n">Core #3 Thread #1 Usage</b><b class="c1">84.3 %</b><b class="c2">0.0 %</b><b class="c3">100.0 %</b><b class="c4">88.7 %</b><b class="c5">0</b></div>
<div class="w" style="top:1350px"><svg><use href="#iC"/></svg><b class="n">Core #4 Thread #0 Usage</b><b class="c1">82.7 %</b><b class="c2">0.0 %</b><b class="c3">100.0 %</b><b class="c4">87.5 %</b><b class="c5">0</b></div>
<div class="w" style="top:1375px"><svg><use href="#iC"/></svg><b class="n">Core #4 Thread #1 Usage</b><b class="c1">83.2 %</b><b class="c2">0.0 %</b><b class="c3">100.0 %</b><b class="c4">88.5 %</b><b class="c5">0</b></div>
<div class="w" style="top:1400px"><svg><use href="#iC"/></svg><b class="n">Core #5 Thread #0 Usage</b><b class="c1">83.7 %</b><b class="c2">0.0 %</b><b class="c3">100.0 %</b><b class="c4">89.0 %</b><b class="c5">0</b></div>
<div class="w" style="top:1425px"><svg><use href="#iC"/></svg><b class="n">Core #5 Thread #1 Usage</b><b class="c1">83.7 %</b><b class="c2">0.0 %</b><b class="c3">100.0 %</b><b class="c4">88.5 %</b><b class="c5">0</b></div>
<div class="w" style="top:1450px"><svg><use href="#iC"/></svg><b class="n">Core #6 Thread #0 Usage</b><b class="c1">82.7 %</b><b class="c2">1.6 %</b><b class="c3">100.0 %</b><b class="c4">86.7 %</b><b class="c5">0</b></div>
<div class="w" style="top:1475px"><svg><use href="#iC"/></svg><b class="n">Core #6 Thread #1 Usage</b><b class="c1">84.3 %</b><b class="c2">0.0 %</b><b class="c3">100.0 %</b><b class="c4">88.3 %</b><b class="c5">0</b></div>
<div class="w" style="top:1500px"><svg><use href="#iC"/></svg><b class="n">Core #7 Thread #0 Usage</b><b class="c1">84.3 %</b><b class="c2">0.0 %</b><b class="c3">100.0 %</b><b class="c4">88.6 %</b><b class="c5">0</b></div>
<div class="w" style="top:1525px"><svg><use href="#iC"/></svg><b class="n">Core #7 Thread #1 Usage</b><b class="c1">87.5 %</b><b class="c2">0.0 %</b><b class="c3">100.0 %</b><b class="c4">89.5 %</b><b class="c5">0</b></div>
<div class="w" style="top:1550px"><svg><use href="#iC"/></svg><b class="n">Max CPU/Thread Usage</b><b class="c1">88.1 %</b><b class="c2">2.1 %</b><b class="c3">100.0 %</b><b class="c4">91.3 %</b><b class="c5">0</b></div>
<div class="w" style="top:1575px"><svg><use href="#iC"/></svg><b class="n">Total CPU Usage</b><b class="c1">84.5 %</b><b class="c2">0.3 %</b><b class="c3">100.0 %</b><b class="c4">88.3 %</b><b class="c5">0</b></div>
<div class="w" style="top:1600px"><svg><use href="#iC"/></svg><b class="n">Core #0 Ratio</b><b class="c1">38.0 x</b><b class="c2">38.0 x</b><b class="c3">38.0 x</b><b class="c4">38.0 x</b><b class="c5">0</b></div>
<div class="w" style="top:1625px"><svg><use href="#iC"/></svg><b class="n">Core #1 Ratio</b><b class="c1">38.0 x</b><b class="c2">38.0 x</b><b class="c3">38.0 x</b><b class="c4">38.0 x</b><b class="c5">0</b></div>
<div class="w" style="top:1650px"><svg><use href="#iC"/></svg><b class="n">Core #2 Ratio</b><b class="c1">38.0 x</b><b class="c2">38.0 x</b><b class="c3">38.0 x</b><b class="c4">38.0 x</b><b class="c5">0</b></div>
<div class="w" style="top:1675px"><svg><use href="#iC"/></svg><b class="n">Core #3 Ratio</b><b class="c1">38.0 x</b><b class="c2">38.0 x</b><b class="c3">38.0 x</b><b class="c4">38.0 x</b><b class="c5">0</b></div>
<div class="w" style="top:1700px"><svg><use href="#iC"/></svg><b class="n">Core #4 Ratio</b><b class="c1">38.0 x</b><b class="c2">38.0 x</b><b class="c3">38.0 x</b><b class="c4">38.0 x</b><b class="c5">0</b></div>
<div class="w" style="top:1725px"><svg><use href="#iC"/></svg><b class="n">Core #5 Ratio</b><b class="c1">38.0 x</b><b class="c2">38.0 x</b><b class="c3">38.0 x</b><b class="c4">38.0 x</b><b class="c5">0</b></div>
<div class="w" style="top:1750px"><svg><use href="#iC"/></svg><b class="n">Core #6 Ratio</b><b class="c1">38.0 x</b><b class="c2">38.0 x</b><b class="c3">38.0 x</b><b class="c4">38.0 x</b><b class="c5">0</b></div>
<div class="w" style="top:1775px"><svg><use href="#iC"/></svg><b class="n">Core #7 Ratio</b><b class="c1">38.0 x</b><b class="c2">38.0 x</b><b class="c3">38.0 x</b><b class="c4">38.0 x</b><b class="c5">0</b></div>
<div class="w" style="top:1800px"><svg><use href="#iC"/></svg><b class="n">Current DL rate</b><b class="c1">0.000 KB/s</b><b class="c2">0.000 KB/s</b><b class="c3">0.000 KB/s</b><b class="c4">0.000 KB/s</b><b class="c5">0</b></div>
<div class="w" style="top:1825px"><svg><use href="#iC"/></svg><b class="n">Current UP rate</b><b class="c1">0.000 KB/s</b><b class="c2">0.000 KB/s</b><b class="c3">0.000 KB/s</b><b class="c4">0.000 KB/s</b><b class="c5">0</b></div>
</div>
<div class="a" style="left:2559px;top:34px;width:2px;height:1988px;background:#5c5c5c"></div>
<div class="a" style="left:3839px;top:34px;width:1px;height:1988px;background:#5c5c5c"></div>
<div class="a" style="left:0;top:2021px;width:1279px;height:1px;background:#85878f"></div><div class="a" style="left:1279px;top:2021px;width:2561px;height:1px;background:#5f5f5f"></div>
<div class="a" style="left:0;top:2022px;width:3840px;height:75px;background:#f0f0f0"></div>
<div class="a" style="left:1px;top:2033px;width:63px;height:53px;background:#e1e1e1;border:1px solid #adadad"></div>
<div class="a" style="left:66px;top:2033px;width:63px;height:53px;background:#e1e1e1;border:1px solid #adadad"></div>
<div class="a" style="left:3389px;top:2033px;width:63px;height:53px;background:#e1e1e1;border:1px solid #adadad"></div>
<div class="a" style="left:3556px;top:2033px;width:63px;height:53px;background:#e1e1e1;border:1px solid #adadad"></div>
<div class="a" style="left:3623px;top:2033px;width:63px;height:53px;background:#e1e1e1;border:1px solid #adadad"></div>
<div class="a" style="left:3693px;top:2033px;width:63px;height:53px;background:#e1e1e1;border:1px solid #adadad"></div>
<div class="a" style="left:3763px;top:2033px;width:63px;height:53px;background:#e1e1e1;border:1px solid #adadad"></div>
<svg class="a" style="left:0;top:2025px" width="140" height="72" viewBox="0 2025 140 72">
<g fill="#2f8fe6" stroke="#ffffff" stroke-width="0.9" stroke-linejoin="miter">
<path d="M8.2 2061.4L19 2050V2056H29.9V2066.8H19V2072.8Z"/>
<path d="M55.7 2061.4L44.3 2050V2056H34V2066.8H44.3V2072.8Z"/>
<path d="M96.8 2061.4L85.3 2050V2056H74.7V2066.8H85.3V2072.8Z"/>
<path d="M97 2061.4L108 2050V2056H119V2066.8H108V2072.8Z"/>
</g></svg>
<svg class="a" style="left:3396px;top:2036px" width="50" height="48" viewBox="0 0 50 48">
<rect x="8" y="3" width="22" height="16" rx="1" fill="#2d8fe0" stroke="#555" stroke-width="1.2"/>
<path d="M10 17Q18 6 28 5" stroke="#bfe3ff" stroke-width="2" fill="none"/>
<ellipse cx="19" cy="24" rx="7" ry="2.5" fill="#999"/>
<path d="M30 12H40V22" stroke="#777" stroke-width="1" fill="none"/>
<rect x="22" y="23" width="22" height="16" rx="1" fill="#2d8fe0" stroke="#555" stroke-width="1.2"/>
<path d="M24 37Q32 26 42 25" stroke="#bfe3ff" stroke-width="2" fill="none"/>
<ellipse cx="33" cy="44" rx="7" ry="2.5" fill="#999"/>
</svg>
<div class="a" style="left:3491px;top:2043px;line-height:25px;font-size:17px;white-space:pre">0:07:26</div>
<svg class="a" style="left:3563px;top:2036px" width="48" height="48" viewBox="0 0 48 48">
<circle cx="24" cy="24" r="22.5" fill="#fff" stroke="#222" stroke-width="1.5"/>
<g stroke="#111" stroke-width="1.6"><path d="M24 3V9M24 39V45M3 24H9M39 24H45M13.5 5.8L15.5 9.3M34.5 5.8L32.5 9.3M5.8 13.5L9.3 15.5M42.2 13.5L38.7 15.5M5.8 34.5L9.3 32.5M42.2 34.5L38.7 32.5M13.5 42.2L15.5 38.7M34.5 42.2L32.5 38.7"/></g>
<path d="M26 5L23.5 24H34" stroke="#000" stroke-width="2.6" fill="none"/>
<circle cx="23.5" cy="24" r="1.6" fill="#000"/>
</svg>
<svg class="a" style="left:3634px;top:2036px" width="46" height="48" viewBox="0 0 46 48">
<path d="M4 2H28L36 10V44H4Z" fill="#f4f4f4" stroke="#bbb" stroke-width="1"/>
<path d="M28 2V10H36" fill="#ddd" stroke="#bbb"/>
<g stroke="#d8d8d8" stroke-width="1"><path d="M8 10H30M8 15H30M8 20H30M8 25H30M8 30H30M8 35H26M15 8V38M22 8V38"/></g>
<path d="M27 26H33V32H39V38H33V44H27V38H21V32H27Z" fill="#9ccc3a" stroke="#7aa82a" stroke-width="1"/>
</svg>
<svg class="a" style="left:3700px;top:2036px" width="48" height="48" viewBox="0 0 48 48">
<defs><linearGradient id="gearg" x1="0" y1="0" x2="1" y2="1"><stop offset="0" stop-color="#e8e8e8"/><stop offset="1" stop-color="#a8a8a8"/></linearGradient></defs>
<path d="M38.8 19.4 L45.2 20.4 L45.2 27.6 L38.8 28.6 L37.7 31.2 L41.6 36.4 L36.4 41.6 L31.2 37.7 L28.6 38.8 L27.6 45.2 L20.4 45.2 L19.4 38.8 L16.8 37.7 L11.6 41.6 L6.4 36.4 L10.3 31.2 L9.2 28.6 L2.8 27.6 L2.8 20.4 L9.2 19.4 L10.3 16.8 L6.4 11.6 L11.6 6.4 L16.8 10.3 L19.4 9.2 L20.4 2.8 L27.6 2.8 L28.6 9.2 L31.2 10.3 L36.4 6.4 L41.6 11.6 L37.7 16.8Z" fill="url(#gearg)" stroke="#9a9a9a" stroke-width="0.8"/>
<circle cx="24" cy="24" r="10" fill="#f0f0f0" stroke="#8f8f8f" stroke-width="3"/>
</svg>
<svg class="a" style="left:3774px;top:2042px" width="38" height="36" viewBox="0 0 38 36">
<defs><linearGradient id="xg" x1="0" y1="0" x2="1" y2="1"><stop offset="0" stop-color="#1a6fb0"/><stop offset="0.5" stop-color="#3a98d8"/><stop offset="1" stop-color="#6cc0f0"/></linearGradient></defs>
<path d="M1 8L8 1L19 11L30 1L37 8L27 18L37 28L30 35L19 25L8 35L1 28L11 18Z" fill="url(#xg)"/>
</svg>
<div class="a" style="left:3818px;top:2034px;width:42px;height:42px;border-radius:50%;background:#000;border:2px solid #3a5060"></div>
<svg class="a" style="left:3826px;top:2046px" width="14" height="18"><path d="M12 1L3 9L12 17" stroke="#888" stroke-width="2" fill="none"/></svg>
<div class="a" style="left:1411px;top:1442px;width:775px;height:490px;background:#fff;border:1px solid #1883d7;border-bottom:0;box-shadow:0 3px 16px 2px rgba(0,0,0,0.28)"></div>
<svg class="a" style="left:1424px;top:1452px" width="26" height="26" viewBox="0 0 26 26">
<path d="M9.80 16.63L11.61 17.16L11.61 19.24L9.80 19.77L9.74 19.92L10.64 21.57L9.17 23.04L7.52 22.14L7.37 22.20L6.84 24.01L4.76 24.01L4.23 22.20L4.08 22.14L2.43 23.04L0.96 21.57L1.86 19.92L1.80 19.77L-0.01 19.24L-0.01 17.16L1.80 16.63L1.86 16.48L0.96 14.83L2.43 13.36L4.08 14.26L4.23 14.20L4.76 12.39L6.84 12.39L7.37 14.20L7.52 14.26L9.17 13.36L10.64 14.83L9.74 16.48Z" fill="#d2d2d2"/><circle cx="5.8" cy="18.2" r="2.4" fill="#fff"/>
<path d="M21.29 7.31L23.38 8.13L23.38 10.87L21.29 11.69L21.20 11.90L22.10 13.96L20.16 15.90L18.10 15.00L17.89 15.09L17.07 17.18L14.33 17.18L13.51 15.09L13.30 15.00L11.24 15.90L9.30 13.96L10.20 11.90L10.11 11.69L8.02 10.87L8.02 8.13L10.11 7.31L10.20 7.10L9.30 5.04L11.24 3.10L13.30 4.00L13.51 3.91L14.33 1.82L17.07 1.82L17.89 3.91L18.10 4.00L20.16 3.10L22.10 5.04L21.20 7.10Z" fill="#78cdf4"/><circle cx="15.7" cy="9.5" r="3.4" fill="#fff"/>
</svg>
<div class="a" style="left:1453px;top:1454.5px;line-height:25px;font-size:18px;letter-spacing:-0.35px;white-space:pre">Finished - LinX v0.7.0</div>
<div class="a" style="left:2002px;top:1466px;width:16px;height:1px;background:#111"></div>
<div class="a" style="left:2071px;top:1458px;width:15px;height:15px;border:1px solid #cfcfcf"></div>
<svg class="a" style="left:2142px;top:1457px" width="17" height="17"><path d="M0.5 0.5L16.5 16.5M16.5 0.5L0.5 16.5" stroke="#111" stroke-width="1.2"/></svg>
<div class="a" style="left:1423px;top:1493px;line-height:25px;font-size:17px;white-space:pre">File</div>
<div class="a" style="left:1471px;top:1493px;line-height:25px;font-size:17px;white-space:pre">Settings</div>
<div class="a" style="left:1555px;top:1493px;line-height:25px;font-size:17px;white-space:pre;color:#8a8a8a">Graphs</div>
<div class="a" style="left:1631px;top:1493px;line-height:25px;font-size:17px;white-space:pre">?</div>
<div class="a" style="left:1412px;top:1516px;width:773px;height:94px;background:#f0f0f0"></div>
<div class="a" style="left:1419px;top:1533px;line-height:20px;font-size:15.5px;white-space:pre;color:#000">Problem size:</div>
<div class="a" style="left:1663px;top:1533px;line-height:20px;font-size:15.5px;white-space:pre;color:#000">Memory (MiB):</div>
<div class="a" style="left:1872px;top:1531px;line-height:20px;font-size:15.5px;white-space:pre;color:#000">All</div>
<div class="a" style="left:1969px;top:1533px;line-height:20px;font-size:15.5px;white-space:pre;color:#000">Run:</div>
<div class="a" style="left:1522px;top:1527px;width:90px;height:31px;background:#fff;border:1px solid #7a7a7a"></div>
<div class="a" style="left:1526px;top:1533px;line-height:20px;font-size:16px;white-space:pre;color:#000">20014</div>
<svg class="a" style="left:1592px;top:1538px" width="13" height="9"><path d="M0.7 0.7L6.5 7L12.3 0.7" stroke="#444" stroke-width="1.3" fill="none"/></svg>
<div class="a" style="left:1775px;top:1527px;width:83px;height:31px;background:#fff;border:1px solid #7a7a7a"></div>
<div class="a" style="left:1779px;top:1533px;line-height:20px;font-size:16px;white-space:pre;color:#000">3072</div>
<svg class="a" style="left:1838px;top:1538px" width="13" height="9"><path d="M0.7 0.7L6.5 7L12.3 0.7" stroke="#444" stroke-width="1.3" fill="none"/></svg>
<div class="a" style="left:2012px;top:1527px;width:76px;height:31px;background:#fff;border:1px solid #7a7a7a"></div>
<div class="a" style="left:2016px;top:1533px;line-height:20px;font-size:16px;white-space:pre;color:#000">10</div>
<svg class="a" style="left:2068px;top:1538px" width="13" height="9"><path d="M0.7 0.7L6.5 7L12.3 0.7" stroke="#444" stroke-width="1.3" fill="none"/></svg>
<div class="a" style="left:2095px;top:1527px;width:82px;height:31px;background:#e5e5e5;border:1px solid #cccccc"></div>
<div class="a" style="left:2099px;top:1533px;line-height:20px;font-size:16px;white-space:pre;color:#000">times</div>
<svg class="a" style="left:2157px;top:1538px" width="13" height="9"><path d="M0.7 0.7L6.5 7L12.3 0.7" stroke="#444" stroke-width="1.3" fill="none"/></svg>
<div class="a" style="left:1421px;top:1566px;width:110px;height:34px;background:#e1e1e1;border:1px solid #adadad"></div>
<div class="a" style="left:1421px;top:1573px;width:110px;text-align:center;line-height:20px;font-size:16px">Start</div>
<div class="a" style="left:1540px;top:1566px;width:517px;height:34px;background:#e6e6e6;border:1px solid #bcbcbc;border-radius:3px"></div>
<div class="a" style="left:1543px;top:1569px;width:512px;height:28px;background:#729fcf;border:1px solid #2b5797"></div>
<div class="a" style="left:1543px;top:1573px;width:512px;text-align:center;line-height:20px;font-size:16px;color:#111">Finished without errors in 6 m 38 s</div>
<div class="a" style="left:2066px;top:1566px;width:110px;height:34px;background:#cccccc;border:1px solid #bfbfbf"></div>
<div class="a" style="left:2066px;top:1573px;width:110px;text-align:center;line-height:20px;font-size:16px;color:#838383">Stop</div>
<div class="a" style="left:1412px;top:1610px;width:773px;height:292px;background:#fff"></div>
<div class="a" style="left:1412px;top:1724px;width:747px;height:24px;background:#cce8ff"></div>
<div class="a" style="left:1412px;top:1672px;width:773px;height:1px;background:#f0f0f0"></div>
<div class="a" style="left:1412px;top:1697px;width:773px;height:1px;background:#f0f0f0"></div>
<div class="a" style="left:1412px;top:1723px;width:773px;height:1px;background:#f0f0f0"></div>
<div class="a" style="left:1412px;top:1748px;width:773px;height:1px;background:#f0f0f0"></div>
<div class="a" style="left:1412px;top:1774px;width:773px;height:1px;background:#f0f0f0"></div>
<div class="a" style="left:1412px;top:1799px;width:773px;height:1px;background:#f0f0f0"></div>
<div class="a" style="left:1412px;top:1825px;width:773px;height:1px;background:#f0f0f0"></div>
<div class="a" style="left:1412px;top:1850px;width:773px;height:1px;background:#f0f0f0"></div>
<div class="a" style="left:1412px;top:1876px;width:773px;height:1px;background:#f0f0f0"></div>
<div class="a" style="left:1412px;top:1902px;width:773px;height:1px;background:#f0f0f0"></div>
<div class="a" style="left:1456px;top:1612px;width:1px;height:290px;background:#f0f0f0"></div>
<div class="a" style="left:1531px;top:1612px;width:1px;height:290px;background:#f0f0f0"></div>
<div class="a" style="left:1606px;top:1612px;width:1px;height:290px;background:#f0f0f0"></div>
<div class="a" style="left:1666px;top:1612px;width:1px;height:290px;background:#f0f0f0"></div>
<div class="a" style="left:1764px;top:1612px;width:1px;height:290px;background:#f0f0f0"></div>
<div class="a" style="left:1869px;top:1612px;width:1px;height:290px;background:#f0f0f0"></div>
<div class="a" style="left:2012px;top:1612px;width:1px;height:290px;background:#f0f0f0"></div>
<div class="a" style="left:2158px;top:1612px;width:1px;height:290px;background:#f0f0f0"></div>
<div class="a" style="left:1420px;top:1620px;line-height:20px;font-size:16px">#</div>
<div class="a" style="left:1456px;top:1620px;width:75px;text-align:center;line-height:20px;font-size:16px">Size</div>
<div class="a" style="left:1531px;top:1620px;width:75px;text-align:center;line-height:20px;font-size:16px">LDA</div>
<div class="a" style="left:1606px;top:1620px;width:60px;text-align:center;line-height:20px;font-size:16px">Align</div>
<div class="a" style="left:1666px;top:1620px;width:98px;text-align:center;line-height:20px;font-size:16px">Time</div>
<div class="a" style="left:1764px;top:1620px;width:105px;text-align:center;line-height:20px;font-size:16px">GFlops</div>
<div class="a" style="left:1869px;top:1620px;width:143px;text-align:center;line-height:20px;font-size:16px">Residual</div>
<div class="a" style="left:2012px;top:1620px;width:146px;text-align:center;line-height:20px;font-size:16px">Residual (norm.)</div>
<div class="a" style="left:1420px;top:1650.5px;line-height:20px;font-size:16px">1</div>
<div class="a" style="left:1456px;top:1650.5px;width:75px;text-align:center;line-height:20px;font-size:16px;letter-spacing:0.2px">20014</div>
<div class="a" style="left:1531px;top:1650.5px;width:75px;text-align:center;line-height:20px;font-size:16px;letter-spacing:0.2px">20024</div>
<div class="a" style="left:1606px;top:1650.5px;width:60px;text-align:center;line-height:20px;font-size:16px;letter-spacing:0.2px">4</div>
<div class="a" style="left:1666px;top:1650.5px;width:98px;text-align:center;line-height:20px;font-size:16px;letter-spacing:0.2px">23.524</div>
<div class="a" style="left:1764px;top:1650.5px;width:105px;text-align:center;line-height:20px;font-size:16px;letter-spacing:0.2px">227.2245</div>
<div class="a" style="left:1869px;top:1650.5px;width:143px;text-align:center;line-height:20px;font-size:16px;letter-spacing:0.2px">4.380180e-10</div>
<div class="a" style="left:2012px;top:1650.5px;width:146px;text-align:center;line-height:20px;font-size:16px;letter-spacing:0.2px">3.881631e-02</div>
<div class="a" style="left:1420px;top:1676.5px;line-height:20px;font-size:16px">2</div>
<div class="a" style="left:1456px;top:1676.5px;width:75px;text-align:center;line-height:20px;font-size:16px;letter-spacing:0.2px">20014</div>
<div class="a" style="left:1531px;top:1676.5px;width:75px;text-align:center;line-height:20px;font-size:16px;letter-spacing:0.2px">20024</div>
<div class="a" style="left:1606px;top:1676.5px;width:60px;text-align:center;line-height:20px;font-size:16px;letter-spacing:0.2px">4</div>
<div class="a" style="left:1666px;top:1676.5px;width:98px;text-align:center;line-height:20px;font-size:16px;letter-spacing:0.2px">23.451</div>
<div class="a" style="left:1764px;top:1676.5px;width:105px;text-align:center;line-height:20px;font-size:16px;letter-spacing:0.2px">227.9342</div>
<div class="a" style="left:1869px;top:1676.5px;width:143px;text-align:center;line-height:20px;font-size:16px;letter-spacing:0.2px">4.380180e-10</div>
<div class="a" style="left:2012px;top:1676.5px;width:146px;text-align:center;line-height:20px;font-size:16px;letter-spacing:0.2px">3.881631e-02</div>
<div class="a" style="left:1420px;top:1701.5px;line-height:20px;font-size:16px">3</div>
<div class="a" style="left:1456px;top:1701.5px;width:75px;text-align:center;line-height:20px;font-size:16px;letter-spacing:0.2px">20014</div>
<div class="a" style="left:1531px;top:1701.5px;width:75px;text-align:center;line-height:20px;font-size:16px;letter-spacing:0.2px">20024</div>
<div class="a" style="left:1606px;top:1701.5px;width:60px;text-align:center;line-height:20px;font-size:16px;letter-spacing:0.2px">4</div>
<div class="a" style="left:1666px;top:1701.5px;width:98px;text-align:center;line-height:20px;font-size:16px;letter-spacing:0.2px">23.482</div>
<div class="a" style="left:1764px;top:1701.5px;width:105px;text-align:center;line-height:20px;font-size:16px;letter-spacing:0.2px">227.6328</div>
<div class="a" style="left:1869px;top:1701.5px;width:143px;text-align:center;line-height:20px;font-size:16px;letter-spacing:0.2px">4.380180e-10</div>
<div class="a" style="left:2012px;top:1701.5px;width:146px;text-align:center;line-height:20px;font-size:16px;letter-spacing:0.2px">3.881631e-02</div>
<div class="a" style="left:1420px;top:1727.5px;line-height:20px;font-size:16px">4</div>
<div class="a" style="left:1456px;top:1727.5px;width:75px;text-align:center;line-height:20px;font-size:16px;letter-spacing:0.2px">20014</div>
<div class="a" style="left:1531px;top:1727.5px;width:75px;text-align:center;line-height:20px;font-size:16px;letter-spacing:0.2px">20024</div>
<div class="a" style="left:1606px;top:1727.5px;width:60px;text-align:center;line-height:20px;font-size:16px;letter-spacing:0.2px">4</div>
<div class="a" style="left:1666px;top:1727.5px;width:98px;text-align:center;line-height:20px;font-size:16px;letter-spacing:0.2px">23.430</div>
<div class="a" style="left:1764px;top:1727.5px;width:105px;text-align:center;line-height:20px;font-size:16px;letter-spacing:0.2px">228.1439</div>
<div class="a" style="left:1869px;top:1727.5px;width:143px;text-align:center;line-height:20px;font-size:16px;letter-spacing:0.2px">4.380180e-10</div>
<div class="a" style="left:2012px;top:1727.5px;width:146px;text-align:center;line-height:20px;font-size:16px;letter-spacing:0.2px">3.881631e-02</div>
<div class="a" style="left:1420px;top:1752.5px;line-height:20px;font-size:16px">5</div>
<div class="a" style="left:1456px;top:1752.5px;width:75px;text-align:center;line-height:20px;font-size:16px;letter-spacing:0.2px">20014</div>
<div class="a" style="left:1531px;top:1752.5px;width:75px;text-align:center;line-height:20px;font-size:16px;letter-spacing:0.2px">20024</div>
<div class="a" style="left:1606px;top:1752.5px;width:60px;text-align:center;line-height:20px;font-size:16px;letter-spacing:0.2px">4</div>
<div class="a" style="left:1666px;top:1752.5px;width:98px;text-align:center;line-height:20px;font-size:16px;letter-spacing:0.2px">23.430</div>
<div class="a" style="left:1764px;top:1752.5px;width:105px;text-align:center;line-height:20px;font-size:16px;letter-spacing:0.2px">228.1363</div>
<div class="a" style="left:1869px;top:1752.5px;width:143px;text-align:center;line-height:20px;font-size:16px;letter-spacing:0.2px">4.380180e-10</div>
<div class="a" style="left:2012px;top:1752.5px;width:146px;text-align:center;line-height:20px;font-size:16px;letter-spacing:0.2px">3.881631e-02</div>
<div class="a" style="left:1420px;top:1778.5px;line-height:20px;font-size:16px">6</div>
<div class="a" style="left:1456px;top:1778.5px;width:75px;text-align:center;line-height:20px;font-size:16px;letter-spacing:0.2px">20014</div>
<div class="a" style="left:1531px;top:1778.5px;width:75px;text-align:center;line-height:20px;font-size:16px;letter-spacing:0.2px">20024</div>
<div class="a" style="left:1606px;top:1778.5px;width:60px;text-align:center;line-height:20px;font-size:16px;letter-spacing:0.2px">4</div>
<div class="a" style="left:1666px;top:1778.5px;width:98px;text-align:center;line-height:20px;font-size:16px;letter-spacing:0.2px">23.495</div>
<div class="a" style="left:1764px;top:1778.5px;width:105px;text-align:center;line-height:20px;font-size:16px;letter-spacing:0.2px">227.5067</div>
<div class="a" style="left:1869px;top:1778.5px;width:143px;text-align:center;line-height:20px;font-size:16px;letter-spacing:0.2px">4.380180e-10</div>
<div class="a" style="left:2012px;top:1778.5px;width:146px;text-align:center;line-height:20px;font-size:16px;letter-spacing:0.2px">3.881631e-02</div>
<div class="a" style="left:1420px;top:1803.5px;line-height:20px;font-size:16px">7</div>
<div class="a" style="left:1456px;top:1803.5px;width:75px;text-align:center;line-height:20px;font-size:16px;letter-spacing:0.2px">20014</div>
<div class="a" style="left:1531px;top:1803.5px;width:75px;text-align:center;line-height:20px;font-size:16px;letter-spacing:0.2px">20024</div>
<div class="a" style="left:1606px;top:1803.5px;width:60px;text-align:center;line-height:20px;font-size:16px;letter-spacing:0.2px">4</div>
<div class="a" style="left:1666px;top:1803.5px;width:98px;text-align:center;line-height:20px;font-size:16px;letter-spacing:0.2px">23.620</div>
<div class="a" style="left:1764px;top:1803.5px;width:105px;text-align:center;line-height:20px;font-size:16px;letter-spacing:0.2px">226.3030</div>
<div class="a" style="left:1869px;top:1803.5px;width:143px;text-align:center;line-height:20px;font-size:16px;letter-spacing:0.2px">4.380180e-10</div>
<div class="a" style="left:2012px;top:1803.5px;width:146px;text-align:center;line-height:20px;font-size:16px;letter-spacing:0.2px">3.881631e-02</div>
<div class="a" style="left:1420px;top:1829.5px;line-height:20px;font-size:16px">8</div>
<div class="a" style="left:1456px;top:1829.5px;width:75px;text-align:center;line-height:20px;font-size:16px;letter-spacing:0.2px">20014</div>
<div class="a" style="left:1531px;top:1829.5px;width:75px;text-align:center;line-height:20px;font-size:16px;letter-spacing:0.2px">20024</div>
<div class="a" style="left:1606px;top:1829.5px;width:60px;text-align:center;line-height:20px;font-size:16px;letter-spacing:0.2px">4</div>
<div class="a" style="left:1666px;top:1829.5px;width:98px;text-align:center;line-height:20px;font-size:16px;letter-spacing:0.2px">23.433</div>
<div class="a" style="left:1764px;top:1829.5px;width:105px;text-align:center;line-height:20px;font-size:16px;letter-spacing:0.2px">228.1112</div>
<div class="a" style="left:1869px;top:1829.5px;width:143px;text-align:center;line-height:20px;font-size:16px;letter-spacing:0.2px">4.380180e-10</div>
<div class="a" style="left:2012px;top:1829.5px;width:146px;text-align:center;line-height:20px;font-size:16px;letter-spacing:0.2px">3.881631e-02</div>
<div class="a" style="left:1420px;top:1854.5px;line-height:20px;font-size:16px">9</div>
<div class="a" style="left:1456px;top:1854.5px;width:75px;text-align:center;line-height:20px;font-size:16px;letter-spacing:0.2px">20014</div>
<div class="a" style="left:1531px;top:1854.5px;width:75px;text-align:center;line-height:20px;font-size:16px;letter-spacing:0.2px">20024</div>
<div class="a" style="left:1606px;top:1854.5px;width:60px;text-align:center;line-height:20px;font-size:16px;letter-spacing:0.2px">4</div>
<div class="a" style="left:1666px;top:1854.5px;width:98px;text-align:center;line-height:20px;font-size:16px;letter-spacing:0.2px">23.466</div>
<div class="a" style="left:1764px;top:1854.5px;width:105px;text-align:center;line-height:20px;font-size:16px;letter-spacing:0.2px">227.7945</div>
<div class="a" style="left:1869px;top:1854.5px;width:143px;text-align:center;line-height:20px;font-size:16px;letter-spacing:0.2px">4.380180e-10</div>
<div class="a" style="left:2012px;top:1854.5px;width:146px;text-align:center;line-height:20px;font-size:16px;letter-spacing:0.2px">3.881631e-02</div>
<div class="a" style="left:1420px;top:1880.5px;line-height:20px;font-size:16px">10</div>
<div class="a" style="left:1456px;top:1880.5px;width:75px;text-align:center;line-height:20px;font-size:16px;letter-spacing:0.2px">20014</div>
<div class="a" style="left:1531px;top:1880.5px;width:75px;text-align:center;line-height:20px;font-size:16px;letter-spacing:0.2px">20024</div>
<div class="a" style="left:1606px;top:1880.5px;width:60px;text-align:center;line-height:20px;font-size:16px;letter-spacing:0.2px">4</div>
<div class="a" style="left:1666px;top:1880.5px;width:98px;text-align:center;line-height:20px;font-size:16px;letter-spacing:0.2px">23.440</div>
<div class="a" style="left:1764px;top:1880.5px;width:105px;text-align:center;line-height:20px;font-size:16px;letter-spacing:0.2px">228.0474</div>
<div class="a" style="left:1869px;top:1880.5px;width:143px;text-align:center;line-height:20px;font-size:16px;letter-spacing:0.2px">4.380180e-10</div>
<div class="a" style="left:2012px;top:1880.5px;width:146px;text-align:center;line-height:20px;font-size:16px;letter-spacing:0.2px">3.881631e-02</div>
<div class="a" style="left:1412px;top:1902px;width:773px;height:30px;background:#f0f0f0;border-top:1px solid #dadada"></div>
<div class="a" style="left:1493px;top:1905px;width:1px;height:24px;background:#dcdcdc"></div>
<div class="a" style="left:1561px;top:1905px;width:1px;height:24px;background:#dcdcdc"></div>
<div class="a" style="left:1659px;top:1905px;width:1px;height:24px;background:#dcdcdc"></div>
<div class="a" style="left:1883px;top:1905px;width:1px;height:24px;background:#dcdcdc"></div>
<div class="a" style="left:2139px;top:1905px;width:1px;height:24px;background:#dcdcdc"></div>
<div class="a" style="left:1433px;top:1909.5px;line-height:20px;font-size:16px;white-space:pre">10/10</div>
<div class="a" style="left:1507px;top:1909.5px;line-height:20px;font-size:16px;white-space:pre">64-bit</div>
<div class="a" style="left:1572px;top:1909.5px;line-height:20px;font-size:16px;white-space:pre">16 Threads</div>
<div class="a" style="left:1693px;top:1909.5px;line-height:20px;font-size:16px;white-space:pre">228.1439 GFlops Peak</div>
<div class="a" style="left:1904px;top:1909.5px;line-height:20px;font-size:16px;white-space:pre">AMD Ryzen 7 1700 Eight-Core</div>
<div class="a" style="left:2142px;top:1909.5px;line-height:20px;font-size:16px;white-space:pre">Log ›</div>
</body></html>
